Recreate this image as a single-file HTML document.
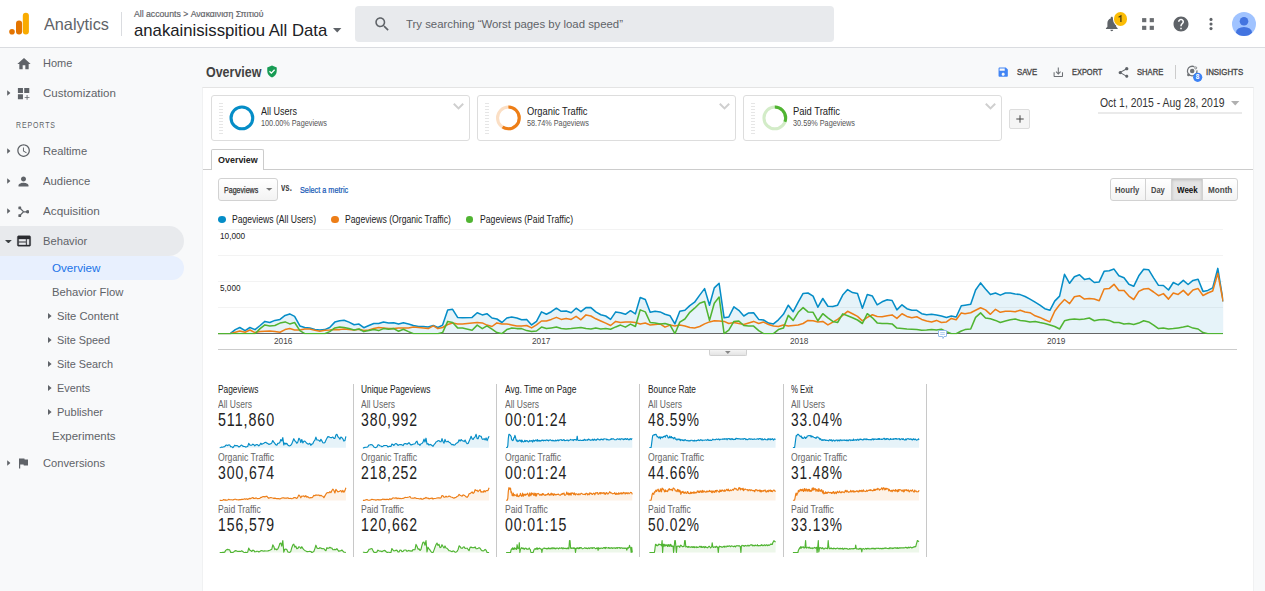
<!DOCTYPE html>
<html><head><meta charset="utf-8">
<style>
*{box-sizing:border-box;margin:0;padding:0}
html,body{width:1265px;height:591px;overflow:hidden;background:#f8f9fa;font-family:"Liberation Sans",sans-serif;color:#222}
body{position:relative}
.abs{position:absolute}
.t{position:absolute;white-space:nowrap;line-height:1;transform-origin:0 0}
#hdr{position:absolute;left:0;top:0;width:1265px;height:48px;background:#fff;border-bottom:1px solid #dadce0}
#panel{position:absolute;left:202px;top:87px;width:1052px;height:504px;background:#fff;border-top:1px solid #e4e4e4;border-left:1px solid #f0f1f2;border-right:1px solid #f0f1f2}
.tri{position:absolute;width:0;height:0;border-left:3.3px solid #5f6368;border-top:2.8px solid transparent;border-bottom:2.8px solid transparent}
.tris{position:absolute;width:0;height:0;border-left:3.5px solid #5f6368;border-top:3px solid transparent;border-bottom:3px solid transparent}
.seg{position:absolute;top:95px;width:259px;height:46px;border:1px solid #ddd;border-radius:3px;background:#fff}
.grip{position:absolute;left:7px;top:7px;width:4px;height:32px;background:repeating-linear-gradient(#e6e6e6 0 1.2px,#fff 1.2px 3px)}
.vdiv{position:absolute;top:384px;width:1px;height:173px;background:#c8c8c8}
.btn{position:absolute;top:178px;height:23px;border:1px solid #d2d2d2;background:linear-gradient(#fff,#f3f3f3)}
</style></head><body>
<div id="hdr"></div>
<!-- logo -->
<svg class="abs" style="left:0;top:0" width="130" height="48" viewBox="0 0 130 48">
<rect x="22.8" y="12.8" width="6.1" height="21.8" rx="3" fill="#f9ab00"/>
<rect x="16" y="20.6" width="6.1" height="14" rx="3" fill="#e37400"/>
<circle cx="12" cy="31.8" r="2.8" fill="#e37400"/>
<rect x="121" y="12" width="1" height="24" fill="#dadce0"/>
</svg>
<!-- account dropdown arrow -->
<svg class="abs" style="left:332.5px;top:28px" width="9" height="5" viewBox="0 0 9 5"><path d="M0,0 L8.4,0 L4.2,4.4 Z" fill="#5f6368"/></svg>
<!-- search -->
<div class="abs" style="left:355px;top:6px;width:479px;height:36px;background:#e8eaed;border-radius:4px"></div>
<svg class="abs" style="left:372.7px;top:14.6px" width="18.4" height="18.4" viewBox="0 0 24 24"><path fill="#5f6368" d="M15.5 14h-.79l-.28-.27C15.41 12.59 16 11.11 16 9.5 16 5.91 13.09 3 9.5 3S3 5.91 3 9.5 5.91 16 9.5 16c1.61 0 3.09-.59 4.23-1.57l.27.28v.79l5 4.99L20.49 19l-4.99-5zm-6 0C7.01 14 5 11.99 5 9.5S7.01 5 9.5 5 14 7.01 14 9.5 11.99 14 9.5 14z"/></svg>
<!-- right icons -->
<svg class="abs" style="left:1103.200px;top:15px" width="17.600" height="17.600" viewBox="0 0 24 24"><path fill="#5f6368" d="M12 22c1.1 0 2-.9 2-2h-4c0 1.1.89 2 2 2zm6-6v-5c0-3.07-1.64-5.64-4.5-6.32V4c0-.83-.67-1.5-1.5-1.5s-1.5.67-1.5 1.5v.68C7.63 5.36 6 7.92 6 11v5l-2 2v1h16v-1l-2-2z"/></svg>
<div class="abs" style="left:1113.7px;top:12.4px;width:13.2px;height:13.2px;border-radius:50%;background:#fbbc04;box-shadow:0 0 0 1px #fff"></div>
<svg class="abs" style="left:1142px;top:18px" width="12" height="12" viewBox="0 0 12 12"><g fill="#6a6d71"><rect x="0.100" y="0.100" width="4.200" height="4.100"/><rect x="7.700" y="0.100" width="4.200" height="4.100"/><rect x="0.100" y="7.800" width="4.200" height="4.100"/><rect x="7.700" y="7.800" width="4.200" height="4.100"/></g></svg>
<svg class="abs" style="left:1172.2px;top:15px" width="18" height="18" viewBox="0 0 24 24"><circle cx="12" cy="12" r="8" fill="#fff"/><path fill="#5f6368" d="M12 2C6.48 2 2 6.48 2 12s4.480 10 10 10 10-4.480 10-10S17.520 2 12 2zm1 17h-2v-2h2v2zm2.070-7.750l-.9.920C13.450 12.900 13 13.500 13 15h-2v-.5c0-1.100.450-2.100 1.170-2.830l1.240-1.260c.370-.360.590-.860.590-1.410 0-1.100-.9-2-2-2s-2 .9-2 2H8c0-2.210 1.790-4 4-4s4 1.790 4 4c0 .880-.360 1.680-.930 2.250z"/></svg>
<svg class="abs" style="left:1208px;top:16px" width="6" height="16" viewBox="0 0 6 16"><g fill="#5f6368"><circle cx="3" cy="3.4" r="1.55"/><circle cx="3" cy="8" r="1.55"/><circle cx="3" cy="12.6" r="1.55"/></g></svg>
<svg class="abs" style="left:1232px;top:11.7px" width="24" height="24" viewBox="0 0 24 24"><defs><clipPath id="av"><circle cx="12" cy="12" r="12"/></clipPath></defs><circle cx="12" cy="12" r="12" fill="#a0c3ff"/><g clip-path="url(#av)" fill="#4374e0"><circle cx="12" cy="9.3" r="4.3"/><ellipse cx="12" cy="20.5" rx="8" ry="5.6"/></g></svg>

<!-- sidebar -->
<div class="abs" style="left:0;top:226px;width:184px;height:30px;background:#e8eaed;border-radius:0 15px 15px 0"></div>
<div class="abs" style="left:0;top:256px;width:184px;height:24px;background:#e8f0fe;border-radius:0 12px 12px 0"></div>
<svg class="abs" style="left:15.5px;top:55.5px" width="16" height="16" viewBox="0 0 24 24"><path fill="#5f6368" d="M10 20v-6h4v6h5v-8h3L12 3 2 12h3v8z"/></svg>
<svg class="abs" style="left:16px;top:86px" width="15.2" height="15.2" viewBox="0 0 24 24"><path fill="#5f6368" d="M3 3h8v8H3zm10 0h8v8h-8zM3 13h8v8H3zm15.200 1.200h-1.400v3.100h-3.100v1.400h3.100v3.100h1.400v-3.100h3.100v-1.400h-3.100z"/></svg>
<svg class="abs" style="left:16px;top:143.4px" width="15.2" height="15.2" viewBox="0 0 24 24"><path fill="#5f6368" d="M11.990 2C6.470 2 2 6.480 2 12s4.470 10 9.990 10C17.520 22 22 17.520 22 12S17.520 2 11.990 2zM12 20c-4.420 0-8-3.580-8-8s3.580-8 8-8 8 3.580 8 8-3.580 8-8 8zm.5-13H11v6l5.250 3.150.75-1.230-4.500-2.670z"/></svg>
<svg class="abs" style="left:16px;top:174px" width="15" height="15" viewBox="0 0 24 24"><path fill="#5f6368" d="M12 12c2.210 0 4-1.790 4-4s-1.790-4-4-4-4 1.790-4 4 1.790 4 4 4zm0 2c-2.670 0-8 1.340-8 4v2h16v-2c0-2.660-5.330-4-8-4z"/></svg>
<svg class="abs" style="left:17.5px;top:205.600px" width="11.600" height="11.600" viewBox="0 0 12.5 12.5"><g fill="#5f6368"><rect x="0.4" y="0.6" width="3" height="3" rx=".6"/><rect x="0.4" y="8.9" width="3" height="3" rx=".6"/><circle cx="10.4" cy="6.25" r="1.9"/></g><path d="M1.9,2.1 L6,6.25 L1.9,10.4 M6,6.25 L10,6.25" stroke="#5f6368" stroke-width="1.300" fill="none"/></svg>
<svg class="abs" style="left:15.5px;top:233.4px" width="16" height="16" viewBox="0 0 24 24"><path fill="#2a2c30" stroke="#2a2c30" stroke-width="0.500" d="M20 4H4c-1.100 0-1.990.9-1.990 2L2 18c0 1.100.9 2 2 2h16c1.100 0 2-.9 2-2V6c0-1.100-.9-2-2-2zm-5 14H4v-4h11v4zm0-5H4V9h11v4zm5 5h-4V9h4v9z"/></svg>
<svg class="abs" style="left:16.400px;top:456px" width="14.400" height="14.400" viewBox="0 0 24 24"><path fill="#5f6368" d="M14.400 6L14 4H5v17h2v-7h5.600l.4 2h7V6z"/></svg>
<svg class="abs" style="left:7.0px;top:90.4px" width="4" height="6" viewBox="0 0 4 6"><path d="M0.2,0.2 L3.4,3 L0.2,5.8 Z" fill="#5f6368"/></svg>
<svg class="abs" style="left:7.0px;top:148.4px" width="4" height="6" viewBox="0 0 4 6"><path d="M0.2,0.2 L3.4,3 L0.2,5.8 Z" fill="#5f6368"/></svg>
<svg class="abs" style="left:7.0px;top:178.4px" width="4" height="6" viewBox="0 0 4 6"><path d="M0.2,0.2 L3.4,3 L0.2,5.8 Z" fill="#5f6368"/></svg>
<svg class="abs" style="left:7.0px;top:208.4px" width="4" height="6" viewBox="0 0 4 6"><path d="M0.2,0.2 L3.4,3 L0.2,5.8 Z" fill="#5f6368"/></svg>
<svg class="abs" style="left:7.0px;top:460.4px" width="4" height="6" viewBox="0 0 4 6"><path d="M0.2,0.2 L3.4,3 L0.2,5.8 Z" fill="#5f6368"/></svg>
<svg class="abs" style="left:5.200px;top:239.600px" width="7" height="3.600" viewBox="0 0 7 3.600"><path d="M0,0 L6.800,0 L3.400,3.500 Z" fill="#3c4043"/></svg>
<svg class="abs" style="left:47.6px;top:313.0px" width="4" height="6" viewBox="0 0 4 6"><path d="M0,0 L3.6,3 L0,6 Z" fill="#5f6368"/></svg>
<svg class="abs" style="left:47.6px;top:337.0px" width="4" height="6" viewBox="0 0 4 6"><path d="M0,0 L3.6,3 L0,6 Z" fill="#5f6368"/></svg>
<svg class="abs" style="left:47.6px;top:361.0px" width="4" height="6" viewBox="0 0 4 6"><path d="M0,0 L3.6,3 L0,6 Z" fill="#5f6368"/></svg>
<svg class="abs" style="left:47.6px;top:385.0px" width="4" height="6" viewBox="0 0 4 6"><path d="M0,0 L3.6,3 L0,6 Z" fill="#5f6368"/></svg>
<svg class="abs" style="left:47.6px;top:409.0px" width="4" height="6" viewBox="0 0 4 6"><path d="M0,0 L3.6,3 L0,6 Z" fill="#5f6368"/></svg>

<!-- title row -->
<svg class="abs" style="left:265.7px;top:65.1px" width="12" height="13" viewBox="0 0 24 26"><path fill="#189c54" d="M12 1L2.500 5v7c0 6 4 11.500 9.500 13 5.500-1.500 9.500-7 9.500-13V5L12 1z"/><path d="M7,12.500 L10.700,16.200 L17.200,9.400" stroke="#fff" stroke-width="2.600" fill="none"/></svg>
<svg class="abs" style="left:996.9px;top:65.5px" width="12.4" height="12.4" viewBox="0 0 24 24"><path fill="#4285f4" d="M17 3H5c-1.110 0-2 .9-2 2v14c0 1.100.890 2 2 2h14c1.100 0 2-.9 2-2V7l-4-4zm-5 16c-1.660 0-3-1.340-3-3s1.340-3 3-3 3 1.340 3 3-1.340 3-3 3zm3-10H5V5h10v4z"/></svg>
<svg class="abs" style="left:1051.900px;top:65.600px" width="12.600" height="12.600" viewBox="0 0 24 24"><path fill="#6d7074" d="M19 12v7H5v-7H3v7c0 1.100.9 2 2 2h14c1.100 0 2-.9 2-2v-7h-2zm-6 .670l2.590-2.580L17 11.500l-5 5-5-5 1.410-1.410L11 12.670V3h2z"/></svg>
<svg class="abs" style="left:1117px;top:65.5px" width="13" height="13" viewBox="0 0 24 24"><path fill="#5f6368" d="M18 16.080c-.760 0-1.440.3-1.960.770L8.910 12.700c.050-.230.090-.460.090-.7s-.040-.470-.090-.7l7.050-4.110c.540.5 1.250.810 2.040.810 1.660 0 3-1.340 3-3s-1.340-3-3-3-3 1.340-3 3c0 .240.040.470.090.7L8.040 9.810C7.500 9.310 6.790 9 6 9c-1.660 0-3 1.340-3 3s1.340 3 3 3c.790 0 1.500-.310 2.040-.810l7.120 4.160c-.050.210-.080.430-.080.650 0 1.610 1.310 2.920 2.920 2.920 1.610 0 2.920-1.310 2.920-2.920s-1.310-2.920-2.920-2.920z"/></svg>
<div class="abs" style="left:1175px;top:65px;width:1px;height:14px;background:#ccc"></div>
<svg class="abs" style="left:1185px;top:65px" width="20" height="18" viewBox="0 0 20 18"><path d="M9.400,1.800 A4.800,4.800 0 1 0 11.950,5.300" fill="none" stroke="#707377" stroke-width="1.250"/><circle cx="10.700" cy="2.900" r="1.050" fill="#f8f9fa" stroke="#707377" stroke-width=".8"/><circle cx="3.500" cy="9.900" r="1.400" fill="#707377"/><circle cx="7.200" cy="6.100" r="2.250" fill="#707377"/><circle cx="12.700" cy="12.300" r="4.600" fill="#3d82f5"/></svg>

<div id="panel"></div>
<!-- segments -->
<div class="seg" style="left:211px"><div class="grip"></div></div>
<div class="seg" style="left:477px"><div class="grip"></div></div>
<div class="seg" style="left:743px"><div class="grip"></div></div>
<svg class="abs" style="left:0;top:0" width="1265" height="591" viewBox="0 0 1265 591" fill="none">
<circle cx="241.900" cy="117.900" r="10.850" stroke="#058dc7" stroke-width="3.100"/>
<circle cx="508.400" cy="117.900" r="10.850" stroke="#fbdfc5" stroke-width="3.100"/>
<circle cx="508.400" cy="117.900" r="10.850" stroke="#ed7e17" stroke-width="3.100" stroke-dasharray="40.050 100" transform="rotate(-90 508.400 117.900)"/>
<circle cx="774.800" cy="117.900" r="10.850" stroke="#d3ecc8" stroke-width="3.100"/>
<circle cx="774.800" cy="117.900" r="10.850" stroke="#50b432" stroke-width="3.100" stroke-dasharray="20.850 100" transform="rotate(-90 774.800 117.900)"/>
<g stroke="#cfcfcf" stroke-width="2"><path d="M453.800,103.800 L458.500,108.400 L463.200,103.800"/><path d="M719.800,103.800 L724.500,108.400 L729.200,103.800"/><path d="M985.800,103.800 L990.500,108.400 L995.200,103.800"/></g>
</svg>
<div class="abs" style="left:1009px;top:109px;width:21px;height:20px;border:1px solid #ddd;border-radius:2px;background:#f5f5f5"></div>
<svg class="abs" style="left:1015.500px;top:115px" width="8" height="8" viewBox="0 0 8 8"><path d="M4,0.300 V7.700 M0.300,4 H7.700" stroke="#444" stroke-width="1"/></svg>
<!-- date -->
<svg class="abs" style="left:1230.800px;top:101px" width="9" height="5" viewBox="0 0 9 5"><path d="M0,0 L8.400,0 L4.200,4.500 Z" fill="#b0b0b0"/></svg>
<div class="abs" style="left:1098px;top:112px;width:144px;height:2px;background:#eaeaea"></div>
<!-- tab -->
<div class="abs" style="left:203px;top:169px;width:1050px;height:1px;background:#ccc"></div>
<div class="abs" style="left:211px;top:149px;width:53px;height:21px;border:1px solid #ccc;border-bottom:none;background:#fff;border-radius:2px 2px 0 0"></div>
<!-- controls -->
<div class="btn" style="left:218px;width:60px;border-radius:3px"></div>
<svg class="abs" style="left:265.800px;top:188.300px" width="7" height="4" viewBox="0 0 7 4"><path d="M0,0 L6.400,0 L3.200,2.800 Z" fill="#777"/></svg>
<div class="btn" style="left:1110px;width:36px;border-radius:3px 0 0 3px"></div>
<div class="btn" style="left:1145px;width:27px"></div>
<div class="btn" style="left:1171px;width:32px;background:#e4e4e4;box-shadow:inset 0 1px 3px rgba(0,0,0,.18)"></div>
<div class="btn" style="left:1202px;width:36px;border-radius:0 3px 3px 0"></div>
<!-- legend dots -->
<div class="abs" style="left:218px;top:216.400px;width:8.200px;height:7px;border-radius:50%;background:#058dc7"></div>
<div class="abs" style="left:331.200px;top:216.300px;width:7.400px;height:7.200px;border-radius:50%;background:#ed7e17"></div>
<div class="abs" style="left:465.800px;top:216.300px;width:7.600px;height:7.200px;border-radius:50%;background:#50b432"></div>
<svg class="abs" style="left:0;top:0" width="1265" height="591" viewBox="0 0 1265 591">
<g stroke="#f3f3f3" stroke-width="1" shape-rendering="crispEdges">
<line x1="218" x2="1223" y1="229.5" y2="229.5"/><line x1="218" x2="1223" y1="255.5" y2="255.5"/><line x1="218" x2="1223" y1="281.5" y2="281.5"/><line x1="218" x2="1223" y1="307.5" y2="307.5"/></g>
<defs><clipPath id="cc"><rect x="210" y="220" width="1013.400" height="114.200"/></clipPath></defs>
<path d="M218.0,333.7 L230.2,333.7 L235.3,329.6 L239.8,327.5 L245.1,330.6 L249.9,327.5 L255.0,329.6 L260.1,325.5 L264.9,321.4 L269.8,322.5 L274.9,320.4 L280.0,319.4 L285.1,315.4 L289.7,313.9 L294.6,316.4 L299.9,325.9 L304.7,327.5 L309.8,327.9 L314.9,329.6 L319.8,330.0 L324.8,329.6 L329.7,327.5 L334.8,322.1 L339.7,320.8 L344.1,320.2 L349.0,322.1 L354.1,324.7 L359.0,324.1 L363.8,327.7 L368.9,325.5 L373.8,323.5 L378.7,323.5 L383.5,322.1 L388.6,322.9 L393.7,322.7 L398.6,324.1 L403.4,322.7 L408.5,323.9 L413.4,325.5 L418.5,326.5 L423.3,326.5 L428.2,326.9 L433.3,325.5 L437.9,327.5 L442.6,325.1 L447.7,309.9 L452.6,309.3 L457.6,317.4 L462.5,317.8 L472.1,317.4 L477.2,312.7 L482.3,314.9 L486.9,313.7 L492.0,318.0 L496.9,319.0 L502.0,322.5 L506.8,318.0 L511.7,317.0 L516.8,318.0 L521.6,319.8 L526.7,319.4 L531.6,324.9 L536.5,321.4 L541.5,311.9 L546.4,314.3 L551.3,311.7 L556.4,308.2 L561.2,311.3 L566.1,310.9 L571.2,312.7 L576.1,308.2 L580.9,311.7 L586.0,307.6 L590.9,307.6 L595.8,311.9 L600.8,314.7 L605.7,316.0 L610.6,319.4 L615.7,311.9 L620.5,312.7 L625.4,314.3 L630.5,310.7 L635.4,313.9 L640.2,297.5 L645.3,299.5 L650.2,312.3 L655.1,311.3 L660.1,311.9 L665.0,314.3 L670.1,315.8 L674.9,323.9 L679.8,311.3 L684.9,310.3 L689.8,305.6 L694.6,302.2 L699.7,295.1 L704.6,288.6 L709.5,305.2 L714.3,287.9 L719.1,283.3 L724.1,317.8 L728.8,317.0 L733.9,306.8 L738.8,310.3 L743.8,316.0 L748.7,312.9 L753.6,312.7 L758.7,319.4 L763.5,320.0 L768.6,323.1 L773.5,323.9 L778.4,319.8 L783.4,314.3 L788.3,305.2 L793.2,311.7 L798.2,302.2 L803.1,293.4 L808.0,293.0 L813.1,296.1 L817.9,307.2 L822.8,298.5 L827.9,306.2 L832.8,306.6 L837.6,305.2 L842.7,295.1 L847.6,289.6 L852.5,292.6 L857.5,293.6 L862.4,308.2 L867.3,294.6 L872.4,296.1 L877.2,304.8 L882.1,301.8 L887.2,299.7 L892.1,300.5 L896.9,309.9 L902.0,304.8 L906.9,308.7 L911.8,310.3 L916.8,310.3 L921.7,313.7 L926.6,314.7 L931.6,314.3 L936.5,314.9 L941.4,316.0 L946.5,317.4 L951.3,316.0 L956.2,317.0 L961.3,305.8 L965.0,305.2 L970.7,304.2 L975.6,290.0 L980.6,282.9 L985.5,289.0 L990.4,294.6 L995.5,293.0 L1000.3,295.1 L1005.4,293.0 L1010.3,293.0 L1015.2,294.0 L1020.2,294.6 L1025.1,296.5 L1030.0,299.1 L1035.1,302.2 L1039.9,305.2 L1044.8,308.7 L1049.9,310.3 L1054.7,301.1 L1059.6,296.1 L1064.5,274.3 L1069.6,283.3 L1074.4,276.8 L1079.5,274.7 L1084.4,279.4 L1089.3,278.4 L1094.3,282.5 L1099.2,281.9 L1104.1,271.3 L1109.2,270.7 L1114.0,269.1 L1118.9,275.8 L1124.0,277.8 L1128.9,284.3 L1133.7,286.3 L1138.8,275.8 L1143.7,269.3 L1148.6,269.7 L1153.6,277.8 L1158.5,285.3 L1163.4,285.5 L1168.5,290.0 L1173.3,282.5 L1178.2,284.9 L1183.3,280.4 L1188.1,284.5 L1193.0,280.4 L1198.1,279.2 L1203.0,291.4 L1207.8,290.4 L1212.7,287.9 L1217.8,268.4 L1223.2,301.5 L1223.2,333.2 L218.0,333.2 Z" fill="#058dc7" fill-opacity="0.1"/>
<line x1="218" x2="1223" y1="333.5" y2="333.5" stroke="#666" stroke-width="1" shape-rendering="crispEdges"/>
<g clip-path="url(#cc)" fill="none" stroke-width="1.550" stroke-linejoin="round">
<path d="M218.0,333.7 L230.2,333.7 L235.3,329.6 L239.8,327.5 L245.1,330.6 L249.9,327.5 L255.0,329.6 L260.1,325.5 L264.9,321.4 L269.8,322.5 L274.9,320.4 L280.0,319.4 L285.1,315.4 L289.7,313.9 L294.6,316.4 L299.9,325.9 L304.7,327.5 L309.8,327.9 L314.9,329.6 L319.8,330.0 L324.8,329.6 L329.7,327.5 L334.8,322.1 L339.7,320.8 L344.1,320.2 L349.0,322.1 L354.1,324.7 L359.0,324.1 L363.8,327.7 L368.9,325.5 L373.8,323.5 L378.7,323.5 L383.5,322.1 L388.6,322.9 L393.7,322.7 L398.6,324.1 L403.4,322.7 L408.5,323.9 L413.4,325.5 L418.5,326.5 L423.3,326.5 L428.2,326.9 L433.3,325.5 L437.9,327.5 L442.6,325.1 L447.7,309.9 L452.6,309.3 L457.6,317.4 L462.5,317.8 L472.1,317.4 L477.2,312.7 L482.3,314.9 L486.9,313.7 L492.0,318.0 L496.9,319.0 L502.0,322.5 L506.8,318.0 L511.7,317.0 L516.8,318.0 L521.6,319.8 L526.7,319.4 L531.6,324.9 L536.5,321.4 L541.5,311.9 L546.4,314.3 L551.3,311.7 L556.4,308.2 L561.2,311.3 L566.1,310.9 L571.2,312.7 L576.1,308.2 L580.9,311.7 L586.0,307.6 L590.9,307.6 L595.8,311.9 L600.8,314.7 L605.7,316.0 L610.6,319.4 L615.7,311.9 L620.5,312.7 L625.4,314.3 L630.5,310.7 L635.4,313.9 L640.2,297.5 L645.3,299.5 L650.2,312.3 L655.1,311.3 L660.1,311.9 L665.0,314.3 L670.1,315.8 L674.9,323.9 L679.8,311.3 L684.9,310.3 L689.8,305.6 L694.6,302.2 L699.7,295.1 L704.6,288.6 L709.5,305.2 L714.3,287.9 L719.1,283.3 L724.1,317.8 L728.8,317.0 L733.9,306.8 L738.8,310.3 L743.8,316.0 L748.7,312.9 L753.6,312.7 L758.7,319.4 L763.5,320.0 L768.6,323.1 L773.5,323.9 L778.4,319.8 L783.4,314.3 L788.3,305.2 L793.2,311.7 L798.2,302.2 L803.1,293.4 L808.0,293.0 L813.1,296.1 L817.9,307.2 L822.8,298.5 L827.9,306.2 L832.8,306.6 L837.6,305.2 L842.7,295.1 L847.6,289.6 L852.5,292.6 L857.5,293.6 L862.4,308.2 L867.3,294.6 L872.4,296.1 L877.2,304.8 L882.1,301.8 L887.2,299.7 L892.1,300.5 L896.9,309.9 L902.0,304.8 L906.9,308.7 L911.8,310.3 L916.8,310.3 L921.7,313.7 L926.6,314.7 L931.6,314.3 L936.5,314.9 L941.4,316.0 L946.5,317.4 L951.3,316.0 L956.2,317.0 L961.3,305.8 L965.0,305.2 L970.7,304.2 L975.6,290.0 L980.6,282.9 L985.5,289.0 L990.4,294.6 L995.5,293.0 L1000.3,295.1 L1005.4,293.0 L1010.3,293.0 L1015.2,294.0 L1020.2,294.6 L1025.1,296.5 L1030.0,299.1 L1035.1,302.2 L1039.9,305.2 L1044.8,308.7 L1049.9,310.3 L1054.7,301.1 L1059.6,296.1 L1064.5,274.3 L1069.6,283.3 L1074.4,276.8 L1079.5,274.7 L1084.4,279.4 L1089.3,278.4 L1094.3,282.5 L1099.2,281.9 L1104.1,271.3 L1109.2,270.7 L1114.0,269.1 L1118.9,275.8 L1124.0,277.8 L1128.9,284.3 L1133.7,286.3 L1138.8,275.8 L1143.7,269.3 L1148.6,269.7 L1153.6,277.8 L1158.5,285.3 L1163.4,285.5 L1168.5,290.0 L1173.3,282.5 L1178.2,284.9 L1183.3,280.4 L1188.1,284.5 L1193.0,280.4 L1198.1,279.2 L1203.0,291.4 L1207.8,290.4 L1212.7,287.9 L1217.8,268.4 L1223.2,301.5" stroke="#058dc7"/>
<path d="M218.0,333.7 L230.2,333.7 L235.3,332.2 L239.8,331.0 L245.1,332.2 L249.9,330.0 L255.0,332.6 L260.1,331.6 L264.9,331.2 L269.8,331.0 L274.9,331.6 L280.0,332.2 L285.1,329.6 L289.7,328.6 L294.6,330.0 L299.9,330.0 L304.7,329.0 L309.8,329.0 L314.9,330.2 L319.8,331.2 L324.8,330.2 L329.7,330.0 L334.8,329.6 L339.7,329.6 L344.1,329.0 L349.0,329.6 L354.1,330.0 L359.0,329.2 L363.8,330.6 L368.9,330.0 L373.8,328.6 L378.7,327.5 L383.5,327.9 L388.6,328.6 L393.7,328.6 L398.6,328.1 L403.4,327.9 L408.5,327.9 L413.4,327.1 L418.5,327.5 L423.3,327.9 L428.2,328.6 L433.3,325.9 L437.9,328.6 L442.6,327.5 L447.7,324.5 L452.6,323.1 L457.6,324.1 L462.5,323.9 L472.1,322.9 L477.2,322.5 L482.3,322.9 L486.9,325.1 L492.0,326.5 L496.9,322.9 L502.0,323.9 L506.8,323.9 L511.7,324.9 L516.8,325.9 L521.6,326.1 L526.7,325.5 L531.6,327.9 L536.5,324.9 L541.5,321.0 L546.4,321.0 L551.3,319.4 L556.4,317.4 L561.2,319.4 L566.1,318.4 L571.2,319.4 L576.1,316.4 L580.9,319.8 L586.0,314.9 L590.9,316.0 L595.8,318.8 L600.8,321.0 L605.7,323.1 L610.6,325.5 L615.7,321.4 L620.5,322.5 L625.4,322.1 L630.5,321.9 L635.4,322.5 L640.2,324.1 L645.3,323.1 L650.2,324.9 L655.1,324.5 L660.1,323.9 L665.0,327.1 L670.1,325.1 L674.9,325.9 L679.8,325.1 L684.9,325.9 L689.8,327.5 L694.6,327.9 L699.7,326.5 L704.6,323.9 L709.5,321.9 L714.3,320.8 L719.1,321.0 L724.1,321.4 L728.8,323.5 L733.9,322.5 L738.8,323.5 L743.8,324.5 L748.7,322.9 L753.6,321.4 L758.7,323.5 L763.5,322.1 L768.6,324.5 L773.5,326.1 L778.4,326.5 L783.4,324.9 L788.3,326.1 L793.2,325.5 L798.2,325.1 L803.1,323.5 L808.0,320.4 L813.1,320.8 L817.9,321.9 L822.8,321.4 L827.9,324.9 L832.8,322.1 L837.6,319.4 L842.7,315.4 L847.6,311.3 L852.5,313.7 L857.5,316.4 L862.4,320.8 L867.3,317.4 L872.4,314.7 L877.2,316.4 L882.1,316.8 L887.2,315.8 L892.1,314.9 L896.9,318.4 L902.0,313.7 L906.9,316.4 L911.8,317.8 L916.8,316.8 L921.7,319.4 L926.6,321.0 L931.6,321.9 L936.5,320.4 L941.4,322.5 L946.5,321.9 L951.3,318.4 L956.2,319.8 L961.3,312.9 L965.0,313.7 L970.7,312.7 L975.6,310.3 L980.6,307.8 L985.5,309.9 L990.4,314.3 L995.5,309.3 L1000.3,312.3 L1005.4,311.3 L1010.3,311.3 L1015.2,311.7 L1020.2,310.3 L1025.1,311.9 L1030.0,312.7 L1035.1,315.8 L1039.9,317.4 L1044.8,319.8 L1049.9,321.9 L1054.7,311.3 L1059.6,304.8 L1064.5,299.5 L1069.6,303.6 L1074.4,296.7 L1079.5,295.7 L1084.4,299.1 L1089.3,298.5 L1094.3,299.1 L1099.2,300.7 L1104.1,289.0 L1109.2,288.6 L1114.0,284.3 L1118.9,290.6 L1124.0,290.4 L1128.9,296.1 L1133.7,299.5 L1138.8,291.4 L1143.7,289.0 L1148.6,288.6 L1153.6,292.0 L1158.5,295.7 L1163.4,293.6 L1168.5,299.1 L1173.3,293.0 L1178.2,294.4 L1183.3,290.4 L1188.1,295.1 L1193.0,290.0 L1198.1,288.6 L1203.0,295.5 L1207.8,293.0 L1212.7,291.0 L1217.8,273.4 L1223.2,301.5" stroke="#ed7e17"/>
<path d="M218.0,333.7 L255.0,333.7 L260.1,328.6 L264.9,324.9 L269.8,325.9 L274.9,325.5 L280.0,323.1 L285.1,321.9 L289.7,323.9 L294.6,322.5 L299.9,330.6 L304.7,333.7 L324.8,333.7 L329.7,331.6 L334.8,327.9 L339.7,327.1 L344.1,327.5 L349.0,328.6 L354.1,330.0 L359.0,329.0 L363.8,331.6 L368.9,330.6 L373.8,329.6 L378.7,330.6 L383.5,328.6 L388.6,329.2 L393.7,328.6 L398.6,331.2 L403.4,329.2 L408.5,331.6 L413.4,333.7 L437.9,333.7 L442.6,332.6 L447.7,321.4 L452.6,322.5 L457.6,327.9 L462.5,328.1 L472.1,330.2 L477.2,325.1 L482.3,328.6 L486.9,325.9 L492.0,329.2 L496.9,332.6 L502.0,333.7 L506.8,329.6 L511.7,328.1 L516.8,328.6 L521.6,328.6 L526.7,330.6 L531.6,331.6 L536.5,331.0 L541.5,327.1 L546.4,328.6 L551.3,327.9 L556.4,327.1 L561.2,328.6 L566.1,329.0 L571.2,328.6 L576.1,327.9 L580.9,327.5 L586.0,328.6 L590.9,329.0 L595.8,327.9 L600.8,329.0 L605.7,328.6 L610.6,329.2 L615.7,326.9 L620.5,325.1 L625.4,327.1 L630.5,324.1 L635.4,326.5 L640.2,309.9 L645.3,311.9 L650.2,322.5 L655.1,323.1 L660.1,323.9 L665.0,323.5 L670.1,325.1 L674.9,333.7 L679.8,322.1 L684.9,319.0 L689.8,312.3 L694.6,308.2 L699.7,303.2 L704.6,301.5 L709.5,320.4 L714.3,303.2 L719.1,297.1 L724.1,333.7 L728.8,330.2 L733.9,321.4 L738.8,321.0 L743.8,325.5 L748.7,325.9 L753.6,326.1 L758.7,330.6 L763.5,333.7 L773.5,333.7 L778.4,329.6 L783.4,328.1 L788.3,315.4 L793.2,320.4 L798.2,312.3 L803.1,307.6 L808.0,311.9 L813.1,312.3 L817.9,320.8 L822.8,313.7 L827.9,317.8 L832.8,321.4 L837.6,322.5 L842.7,313.9 L847.6,315.8 L852.5,317.8 L857.5,320.0 L862.4,323.5 L867.3,313.7 L872.4,317.8 L877.2,322.9 L882.1,323.5 L887.2,323.5 L892.1,323.9 L896.9,328.1 L902.0,328.6 L906.9,329.0 L911.8,329.2 L916.8,329.6 L921.7,330.2 L926.6,330.0 L931.6,329.6 L936.5,330.0 L941.4,329.2 L946.5,331.6 L951.3,333.7 L956.2,333.7 L961.3,331.0 L965.0,329.6 L970.7,329.0 L975.6,317.4 L980.6,312.9 L985.5,318.0 L990.4,318.8 L995.5,320.4 L1000.3,322.5 L1005.4,321.0 L1010.3,319.8 L1015.2,319.0 L1020.2,320.4 L1025.1,321.0 L1030.0,322.1 L1035.1,321.4 L1039.9,322.5 L1044.8,323.5 L1049.9,324.9 L1054.7,326.5 L1059.6,329.0 L1064.5,320.8 L1069.6,319.4 L1074.4,319.0 L1079.5,319.4 L1084.4,319.0 L1089.3,318.0 L1094.3,320.8 L1099.2,319.8 L1104.1,319.4 L1109.2,320.4 L1114.0,322.5 L1118.9,322.5 L1124.0,324.1 L1128.9,323.5 L1133.7,324.5 L1138.8,323.1 L1143.7,320.8 L1148.6,321.9 L1153.6,325.1 L1158.5,328.6 L1163.4,328.1 L1168.5,329.0 L1173.3,328.6 L1178.2,327.9 L1183.3,327.1 L1188.1,326.1 L1193.0,328.1 L1198.1,329.0 L1203.0,332.6 L1207.8,333.7 L1217.8,333.7 L1222.8,333.7" stroke="#50b432"/></g>
</svg>
<!-- bottom line + handle -->
<div class="abs" style="left:218px;top:349px;width:1019px;height:1px;background:#ccc"></div>
<div class="abs" style="left:709px;top:350px;width:38px;height:6px;background:linear-gradient(#f4f4f4,#e4e4e4);border:1px solid #d0d0d0;border-top:none;border-radius:0 0 2px 2px"></div>
<svg class="abs" style="left:725px;top:350.500px" width="6" height="4" viewBox="0 0 6 4"><path d="M0,0 L5.600,0 L2.800,3 Z" fill="#888"/></svg>
<!-- annotation bubble -->
<svg class="abs" style="left:938px;top:330px" width="9" height="10" viewBox="0 0 9 10"><path d="M1,0.500 H8 A.5,.5 0 0 1 8.500,1 V6 A.5,.5 0 0 1 8,6.500 H6 L5,8.500 L4.600,6.500 H1 A.5,.5 0 0 1 .5,6 V1 A.5,.5 0 0 1 1,.5 Z" fill="#fff" stroke="#8ab4e8" stroke-width=".9"/><path d="M2.200,2.600 H6.800 M2.200,4.400 H6.800" stroke="#8ab4e8" stroke-width=".7"/></svg>
<!-- metric dividers -->
<div class="vdiv" style="left:353px"></div>
<div class="vdiv" style="left:496px"></div>
<div class="vdiv" style="left:639px"></div>
<div class="vdiv" style="left:783px"></div>
<div class="vdiv" style="left:926px"></div>
<svg class="abs" style="left:0;top:0" width="1265" height="591" viewBox="0 0 1265 591"><path d="M219.7,447.8 L220.7,447.5 L221.7,447.0 L222.7,447.2 L223.7,446.7 L224.7,446.7 L225.7,445.3 L226.7,445.0 L227.7,445.6 L228.7,444.9 L229.7,445.0 L230.7,446.8 L231.7,446.7 L232.7,447.7 L233.7,446.8 L234.7,445.2 L235.7,445.8 L236.7,445.5 L237.7,445.8 L238.7,446.9 L239.7,446.6 L240.7,445.6 L241.7,445.1 L242.7,446.1 L243.7,446.4 L244.7,446.5 L245.7,447.1 L246.7,446.7 L247.7,446.5 L248.7,443.3 L249.7,444.9 L250.7,445.3 L251.8,445.2 L252.8,444.2 L253.8,444.6 L254.8,445.8 L255.8,444.8 L256.8,444.6 L257.8,444.9 L258.8,445.9 L259.8,444.9 L260.8,443.2 L261.8,444.3 L262.8,443.7 L263.8,443.2 L264.8,442.6 L265.8,442.3 L266.8,443.1 L267.8,443.5 L268.8,444.4 L269.8,444.1 L270.8,443.8 L271.8,442.8 L272.8,440.6 L273.8,442.2 L274.8,443.4 L275.8,444.8 L276.8,445.2 L277.8,443.4 L278.8,443.2 L279.8,442.5 L280.8,439.5 L281.8,441.0 L282.8,437.6 L283.8,444.9 L284.8,442.9 L285.8,444.2 L286.8,443.3 L287.8,445.0 L288.8,445.7 L289.8,445.9 L290.8,445.2 L291.8,443.9 L292.8,441.3 L293.8,438.7 L294.8,440.8 L295.8,441.6 L296.8,443.3 L297.8,442.2 L298.8,438.3 L299.8,439.2 L300.8,442.5 L301.8,439.5 L302.8,442.9 L303.8,441.4 L304.8,441.0 L305.8,442.2 L306.8,443.3 L307.8,443.9 L308.8,444.1 L309.8,443.3 L310.8,445.3 L311.8,444.1 L312.8,443.7 L313.8,441.5 L314.9,440.2 L315.9,437.1 L316.9,440.0 L317.9,440.0 L318.9,440.3 L319.9,441.4 L320.9,439.3 L321.9,440.9 L322.9,442.7 L323.9,443.0 L324.9,442.4 L325.9,440.2 L326.9,438.3 L327.9,436.6 L328.9,436.9 L329.9,437.3 L330.9,437.6 L331.9,437.6 L332.9,437.0 L333.9,438.3 L334.9,438.3 L335.9,435.0 L336.9,434.3 L337.9,436.7 L338.9,437.6 L339.9,439.2 L340.9,437.0 L341.9,437.7 L342.9,438.9 L343.9,441.1 L344.9,440.6 L345.9,436.4 L345.9,447.8 L219.7,447.8 Z" fill="#058dc7" fill-opacity="0.1"/><path d="M219.7,447.8 L220.7,447.5 L221.7,447.0 L222.7,447.2 L223.7,446.7 L224.7,446.7 L225.7,445.3 L226.7,445.0 L227.7,445.6 L228.7,444.9 L229.7,445.0 L230.7,446.8 L231.7,446.7 L232.7,447.7 L233.7,446.8 L234.7,445.2 L235.7,445.8 L236.7,445.5 L237.7,445.8 L238.7,446.9 L239.7,446.6 L240.7,445.6 L241.7,445.1 L242.7,446.1 L243.7,446.4 L244.7,446.5 L245.7,447.1 L246.7,446.7 L247.7,446.5 L248.7,443.3 L249.7,444.9 L250.7,445.3 L251.8,445.2 L252.8,444.2 L253.8,444.6 L254.8,445.8 L255.8,444.8 L256.8,444.6 L257.8,444.9 L258.8,445.9 L259.8,444.9 L260.8,443.2 L261.8,444.3 L262.8,443.7 L263.8,443.2 L264.8,442.6 L265.8,442.3 L266.8,443.1 L267.8,443.5 L268.8,444.4 L269.8,444.1 L270.8,443.8 L271.8,442.8 L272.8,440.6 L273.8,442.2 L274.8,443.4 L275.8,444.8 L276.8,445.2 L277.8,443.4 L278.8,443.2 L279.8,442.5 L280.8,439.5 L281.8,441.0 L282.8,437.6 L283.8,444.9 L284.8,442.9 L285.8,444.2 L286.8,443.3 L287.8,445.0 L288.8,445.7 L289.8,445.9 L290.8,445.2 L291.8,443.9 L292.8,441.3 L293.8,438.7 L294.8,440.8 L295.8,441.6 L296.8,443.3 L297.8,442.2 L298.8,438.3 L299.8,439.2 L300.8,442.5 L301.8,439.5 L302.8,442.9 L303.8,441.4 L304.8,441.0 L305.8,442.2 L306.8,443.3 L307.8,443.9 L308.8,444.1 L309.8,443.3 L310.8,445.3 L311.8,444.1 L312.8,443.7 L313.8,441.5 L314.9,440.2 L315.9,437.1 L316.9,440.0 L317.9,440.0 L318.9,440.3 L319.9,441.4 L320.9,439.3 L321.9,440.9 L322.9,442.7 L323.9,443.0 L324.9,442.4 L325.9,440.2 L326.9,438.3 L327.9,436.6 L328.9,436.9 L329.9,437.3 L330.9,437.6 L331.9,437.6 L332.9,437.0 L333.9,438.3 L334.9,438.3 L335.9,435.0 L336.9,434.3 L337.9,436.7 L338.9,437.6 L339.9,439.2 L340.9,437.0 L341.9,437.7 L342.9,438.9 L343.9,441.1 L344.9,440.6 L345.9,436.4" fill="none" stroke="#058dc7" stroke-width="1.15" stroke-linejoin="round"/>
<path d="M219.7,500.3 L220.7,500.3 L221.7,500.5 L222.7,500.3 L223.7,499.5 L224.7,500.1 L225.7,499.9 L226.7,500.2 L227.7,500.0 L228.7,499.3 L229.7,499.7 L230.7,499.7 L231.7,499.7 L232.7,500.0 L233.7,499.6 L234.7,499.3 L235.7,499.2 L236.7,499.7 L237.7,499.7 L238.7,499.9 L239.7,499.6 L240.7,499.6 L241.7,499.4 L242.7,499.4 L243.7,499.3 L244.7,498.8 L245.7,499.3 L246.7,498.8 L247.7,499.4 L248.7,498.8 L249.7,498.4 L250.7,498.6 L251.8,498.0 L252.8,497.5 L253.8,498.5 L254.8,498.4 L255.8,497.9 L256.8,498.3 L257.8,498.6 L258.8,498.5 L259.8,498.4 L260.8,497.3 L261.8,497.3 L262.8,496.6 L263.8,496.5 L264.8,496.9 L265.8,496.4 L266.8,496.2 L267.8,497.5 L268.8,498.3 L269.8,497.7 L270.8,497.5 L271.8,497.8 L272.8,498.0 L273.8,498.4 L274.8,498.1 L275.8,498.4 L276.8,498.6 L277.8,498.5 L278.8,498.6 L279.8,499.0 L280.8,498.5 L281.8,498.0 L282.8,497.8 L283.8,497.8 L284.8,498.3 L285.8,498.0 L286.8,498.1 L287.8,497.8 L288.8,498.4 L289.8,498.5 L290.8,498.4 L291.8,498.7 L292.8,498.5 L293.8,497.6 L294.8,497.5 L295.8,497.9 L296.8,498.5 L297.8,497.1 L298.8,495.0 L299.8,495.9 L300.8,497.8 L301.8,496.0 L302.8,496.2 L303.8,495.9 L304.8,496.8 L305.8,495.6 L306.8,497.2 L307.8,496.5 L308.8,497.7 L309.8,497.9 L310.8,497.6 L311.8,497.7 L312.8,497.0 L313.8,495.4 L314.9,495.7 L315.9,494.9 L316.9,495.2 L317.9,495.1 L318.9,495.0 L319.9,495.9 L320.9,495.3 L321.9,496.0 L322.9,496.3 L323.9,497.7 L324.9,495.9 L325.9,494.2 L326.9,492.8 L327.9,492.6 L328.9,492.8 L329.9,491.7 L330.9,492.7 L331.9,490.5 L332.9,489.1 L333.9,490.5 L334.9,493.0 L335.9,489.4 L336.9,490.6 L337.9,492.0 L338.9,491.5 L339.9,491.1 L340.9,490.5 L341.9,492.1 L342.9,490.4 L343.9,492.3 L344.9,490.6 L345.9,487.7 L345.9,500.5 L219.7,500.5 Z" fill="#ed7e17" fill-opacity="0.1"/><path d="M219.7,500.3 L220.7,500.3 L221.7,500.5 L222.7,500.3 L223.7,499.5 L224.7,500.1 L225.7,499.9 L226.7,500.2 L227.7,500.0 L228.7,499.3 L229.7,499.7 L230.7,499.7 L231.7,499.7 L232.7,500.0 L233.7,499.6 L234.7,499.3 L235.7,499.2 L236.7,499.7 L237.7,499.7 L238.7,499.9 L239.7,499.6 L240.7,499.6 L241.7,499.4 L242.7,499.4 L243.7,499.3 L244.7,498.8 L245.7,499.3 L246.7,498.8 L247.7,499.4 L248.7,498.8 L249.7,498.4 L250.7,498.6 L251.8,498.0 L252.8,497.5 L253.8,498.5 L254.8,498.4 L255.8,497.9 L256.8,498.3 L257.8,498.6 L258.8,498.5 L259.8,498.4 L260.8,497.3 L261.8,497.3 L262.8,496.6 L263.8,496.5 L264.8,496.9 L265.8,496.4 L266.8,496.2 L267.8,497.5 L268.8,498.3 L269.8,497.7 L270.8,497.5 L271.8,497.8 L272.8,498.0 L273.8,498.4 L274.8,498.1 L275.8,498.4 L276.8,498.6 L277.8,498.5 L278.8,498.6 L279.8,499.0 L280.8,498.5 L281.8,498.0 L282.8,497.8 L283.8,497.8 L284.8,498.3 L285.8,498.0 L286.8,498.1 L287.8,497.8 L288.8,498.4 L289.8,498.5 L290.8,498.4 L291.8,498.7 L292.8,498.5 L293.8,497.6 L294.8,497.5 L295.8,497.9 L296.8,498.5 L297.8,497.1 L298.8,495.0 L299.8,495.9 L300.8,497.8 L301.8,496.0 L302.8,496.2 L303.8,495.9 L304.8,496.8 L305.8,495.6 L306.8,497.2 L307.8,496.5 L308.8,497.7 L309.8,497.9 L310.8,497.6 L311.8,497.7 L312.8,497.0 L313.8,495.4 L314.9,495.7 L315.9,494.9 L316.9,495.2 L317.9,495.1 L318.9,495.0 L319.9,495.9 L320.9,495.3 L321.9,496.0 L322.9,496.3 L323.9,497.7 L324.9,495.9 L325.9,494.2 L326.9,492.8 L327.9,492.6 L328.9,492.8 L329.9,491.7 L330.9,492.7 L331.9,490.5 L332.9,489.1 L333.9,490.5 L334.9,493.0 L335.9,489.4 L336.9,490.6 L337.9,492.0 L338.9,491.5 L339.9,491.1 L340.9,490.5 L341.9,492.1 L342.9,490.4 L343.9,492.3 L344.9,490.6 L345.9,487.7" fill="none" stroke="#ed7e17" stroke-width="1.15" stroke-linejoin="round"/>
<path d="M219.7,552.5 L220.7,552.5 L221.7,552.5 L222.7,552.4 L223.7,552.4 L224.7,552.1 L225.7,550.4 L226.7,549.6 L227.7,549.4 L228.7,549.8 L229.7,549.9 L230.7,552.5 L231.7,552.3 L232.7,552.5 L233.7,551.9 L234.7,551.0 L235.7,550.6 L236.7,551.0 L237.7,551.5 L238.7,551.4 L239.7,551.4 L240.7,551.5 L241.7,550.8 L242.7,551.5 L243.7,552.2 L244.7,552.5 L245.7,552.2 L246.7,552.5 L247.7,552.2 L248.7,548.1 L249.7,550.1 L250.7,550.5 L251.8,551.5 L252.8,550.2 L253.8,550.4 L254.8,551.8 L255.8,551.7 L256.8,551.2 L257.8,551.3 L258.8,552.0 L259.8,551.4 L260.8,550.8 L261.8,550.6 L262.8,551.0 L263.8,551.1 L264.8,550.9 L265.8,551.0 L266.8,551.0 L267.8,550.9 L268.8,550.6 L269.8,550.3 L270.8,549.7 L271.8,549.2 L272.8,544.9 L273.8,546.5 L274.8,549.6 L275.8,548.9 L276.8,549.8 L277.8,548.9 L278.8,546.8 L279.8,543.6 L280.8,543.0 L281.8,546.1 L282.8,540.5 L283.8,552.1 L284.8,549.2 L285.8,549.1 L286.8,549.5 L287.8,551.9 L288.8,552.3 L289.8,552.4 L290.8,551.3 L291.8,547.7 L292.8,545.0 L293.8,544.1 L294.8,547.1 L295.8,546.2 L296.8,548.7 L297.8,548.4 L298.8,546.9 L299.8,547.0 L300.8,548.5 L301.8,546.7 L302.8,548.4 L303.8,549.6 L304.8,550.4 L305.8,550.9 L306.8,551.6 L307.8,551.6 L308.8,551.5 L309.8,551.3 L310.8,551.5 L311.8,552.5 L312.8,552.1 L313.8,551.5 L314.9,548.6 L315.9,545.2 L316.9,547.9 L317.9,548.5 L318.9,548.5 L319.9,547.7 L320.9,548.1 L321.9,548.7 L322.9,548.5 L323.9,548.7 L324.9,550.0 L325.9,550.7 L326.9,547.7 L327.9,548.3 L328.9,548.1 L329.9,547.3 L330.9,548.0 L331.9,548.1 L332.9,549.7 L333.9,549.6 L334.9,549.4 L335.9,549.7 L336.9,548.6 L337.9,550.2 L338.9,551.3 L339.9,550.9 L340.9,550.7 L341.9,550.0 L342.9,551.1 L343.9,552.2 L344.9,552.3 L345.9,552.5 L345.9,552.5 L219.7,552.5 Z" fill="#50b432" fill-opacity="0.1"/><path d="M219.7,552.5 L220.7,552.5 L221.7,552.5 L222.7,552.4 L223.7,552.4 L224.7,552.1 L225.7,550.4 L226.7,549.6 L227.7,549.4 L228.7,549.8 L229.7,549.9 L230.7,552.5 L231.7,552.3 L232.7,552.5 L233.7,551.9 L234.7,551.0 L235.7,550.6 L236.7,551.0 L237.7,551.5 L238.7,551.4 L239.7,551.4 L240.7,551.5 L241.7,550.8 L242.7,551.5 L243.7,552.2 L244.7,552.5 L245.7,552.2 L246.7,552.5 L247.7,552.2 L248.7,548.1 L249.7,550.1 L250.7,550.5 L251.8,551.5 L252.8,550.2 L253.8,550.4 L254.8,551.8 L255.8,551.7 L256.8,551.2 L257.8,551.3 L258.8,552.0 L259.8,551.4 L260.8,550.8 L261.8,550.6 L262.8,551.0 L263.8,551.1 L264.8,550.9 L265.8,551.0 L266.8,551.0 L267.8,550.9 L268.8,550.6 L269.8,550.3 L270.8,549.7 L271.8,549.2 L272.8,544.9 L273.8,546.5 L274.8,549.6 L275.8,548.9 L276.8,549.8 L277.8,548.9 L278.8,546.8 L279.8,543.6 L280.8,543.0 L281.8,546.1 L282.8,540.5 L283.8,552.1 L284.8,549.2 L285.8,549.1 L286.8,549.5 L287.8,551.9 L288.8,552.3 L289.8,552.4 L290.8,551.3 L291.8,547.7 L292.8,545.0 L293.8,544.1 L294.8,547.1 L295.8,546.2 L296.8,548.7 L297.8,548.4 L298.8,546.9 L299.8,547.0 L300.8,548.5 L301.8,546.7 L302.8,548.4 L303.8,549.6 L304.8,550.4 L305.8,550.9 L306.8,551.6 L307.8,551.6 L308.8,551.5 L309.8,551.3 L310.8,551.5 L311.8,552.5 L312.8,552.1 L313.8,551.5 L314.9,548.6 L315.9,545.2 L316.9,547.9 L317.9,548.5 L318.9,548.5 L319.9,547.7 L320.9,548.1 L321.9,548.7 L322.9,548.5 L323.9,548.7 L324.9,550.0 L325.9,550.7 L326.9,547.7 L327.9,548.3 L328.9,548.1 L329.9,547.3 L330.9,548.0 L331.9,548.1 L332.9,549.7 L333.9,549.6 L334.9,549.4 L335.9,549.7 L336.9,548.6 L337.9,550.2 L338.9,551.3 L339.9,550.9 L340.9,550.7 L341.9,550.0 L342.9,551.1 L343.9,552.2 L344.9,552.3 L345.9,552.5" fill="none" stroke="#50b432" stroke-width="1.15" stroke-linejoin="round"/>
<path d="M362.9,447.8 L363.9,447.8 L364.9,447.4 L365.9,447.3 L366.9,447.2 L367.9,446.8 L368.9,445.0 L369.9,445.0 L370.9,444.5 L371.9,444.7 L372.9,445.5 L373.9,447.0 L374.9,447.4 L375.9,447.6 L376.9,447.1 L377.9,444.9 L378.9,444.9 L379.9,445.7 L380.9,446.0 L381.9,446.7 L382.9,446.2 L383.9,445.6 L384.9,445.5 L385.9,445.5 L386.9,445.5 L387.9,447.0 L388.9,446.4 L389.9,446.2 L390.9,446.5 L391.9,444.0 L392.9,444.5 L393.9,445.5 L395.0,444.0 L396.0,443.5 L397.0,444.2 L398.0,445.4 L399.0,444.8 L400.0,444.6 L401.0,444.5 L402.0,444.9 L403.0,445.6 L404.0,444.1 L405.0,443.5 L406.0,443.6 L407.0,444.3 L408.0,443.5 L409.0,442.7 L410.0,444.0 L411.0,445.0 L412.0,444.6 L413.0,444.3 L414.0,444.0 L415.0,443.7 L416.0,442.0 L417.0,441.2 L418.0,444.2 L419.0,444.2 L420.0,445.3 L421.0,443.8 L422.0,443.5 L423.0,442.2 L424.0,439.1 L425.0,442.0 L426.0,438.2 L427.0,444.1 L428.0,443.7 L429.0,445.1 L430.0,444.4 L431.0,444.7 L432.0,445.5 L433.0,446.3 L434.0,444.7 L435.0,443.7 L436.0,442.0 L437.0,441.5 L438.0,440.7 L439.0,440.5 L440.0,441.7 L441.0,441.8 L442.0,438.6 L443.0,441.5 L444.0,443.2 L445.0,439.4 L446.0,441.7 L447.0,441.8 L448.0,441.1 L449.0,442.2 L450.0,442.7 L451.0,443.9 L452.0,444.8 L453.0,444.4 L454.0,445.2 L455.0,444.8 L456.0,443.5 L457.0,442.9 L458.1,442.3 L459.1,439.8 L460.1,441.1 L461.1,439.5 L462.1,440.6 L463.1,440.9 L464.1,441.6 L465.1,440.0 L466.1,442.3 L467.1,443.7 L468.1,443.5 L469.1,441.2 L470.1,439.1 L471.1,436.3 L472.1,438.8 L473.1,439.4 L474.1,437.7 L475.1,436.9 L476.1,434.3 L477.1,438.6 L478.1,438.7 L479.1,435.6 L480.1,436.1 L481.1,436.3 L482.1,438.9 L483.1,439.4 L484.1,438.7 L485.1,440.0 L486.1,437.9 L487.1,440.6 L488.1,438.1 L489.1,436.3 L489.1,447.8 L362.9,447.8 Z" fill="#058dc7" fill-opacity="0.1"/><path d="M362.9,447.8 L363.9,447.8 L364.9,447.4 L365.9,447.3 L366.9,447.2 L367.9,446.8 L368.9,445.0 L369.9,445.0 L370.9,444.5 L371.9,444.7 L372.9,445.5 L373.9,447.0 L374.9,447.4 L375.9,447.6 L376.9,447.1 L377.9,444.9 L378.9,444.9 L379.9,445.7 L380.9,446.0 L381.9,446.7 L382.9,446.2 L383.9,445.6 L384.9,445.5 L385.9,445.5 L386.9,445.5 L387.9,447.0 L388.9,446.4 L389.9,446.2 L390.9,446.5 L391.9,444.0 L392.9,444.5 L393.9,445.5 L395.0,444.0 L396.0,443.5 L397.0,444.2 L398.0,445.4 L399.0,444.8 L400.0,444.6 L401.0,444.5 L402.0,444.9 L403.0,445.6 L404.0,444.1 L405.0,443.5 L406.0,443.6 L407.0,444.3 L408.0,443.5 L409.0,442.7 L410.0,444.0 L411.0,445.0 L412.0,444.6 L413.0,444.3 L414.0,444.0 L415.0,443.7 L416.0,442.0 L417.0,441.2 L418.0,444.2 L419.0,444.2 L420.0,445.3 L421.0,443.8 L422.0,443.5 L423.0,442.2 L424.0,439.1 L425.0,442.0 L426.0,438.2 L427.0,444.1 L428.0,443.7 L429.0,445.1 L430.0,444.4 L431.0,444.7 L432.0,445.5 L433.0,446.3 L434.0,444.7 L435.0,443.7 L436.0,442.0 L437.0,441.5 L438.0,440.7 L439.0,440.5 L440.0,441.7 L441.0,441.8 L442.0,438.6 L443.0,441.5 L444.0,443.2 L445.0,439.4 L446.0,441.7 L447.0,441.8 L448.0,441.1 L449.0,442.2 L450.0,442.7 L451.0,443.9 L452.0,444.8 L453.0,444.4 L454.0,445.2 L455.0,444.8 L456.0,443.5 L457.0,442.9 L458.1,442.3 L459.1,439.8 L460.1,441.1 L461.1,439.5 L462.1,440.6 L463.1,440.9 L464.1,441.6 L465.1,440.0 L466.1,442.3 L467.1,443.7 L468.1,443.5 L469.1,441.2 L470.1,439.1 L471.1,436.3 L472.1,438.8 L473.1,439.4 L474.1,437.7 L475.1,436.9 L476.1,434.3 L477.1,438.6 L478.1,438.7 L479.1,435.6 L480.1,436.1 L481.1,436.3 L482.1,438.9 L483.1,439.4 L484.1,438.7 L485.1,440.0 L486.1,437.9 L487.1,440.6 L488.1,438.1 L489.1,436.3" fill="none" stroke="#058dc7" stroke-width="1.15" stroke-linejoin="round"/>
<path d="M362.9,500.4 L363.9,500.4 L364.9,500.2 L365.9,499.8 L366.9,499.6 L367.9,500.0 L368.9,500.3 L369.9,500.1 L370.9,499.8 L371.9,499.3 L372.9,499.5 L373.9,499.8 L374.9,499.7 L375.9,500.1 L376.9,499.7 L377.9,499.6 L378.9,499.9 L379.9,499.9 L380.9,499.9 L381.9,499.5 L382.9,499.1 L383.9,499.6 L384.9,499.2 L385.9,499.6 L386.9,499.2 L387.9,499.4 L388.9,499.7 L389.9,498.6 L390.9,499.5 L391.9,498.7 L392.9,497.9 L393.9,498.0 L395.0,498.3 L396.0,497.7 L397.0,498.7 L398.0,498.1 L399.0,498.6 L400.0,498.3 L401.0,498.7 L402.0,498.5 L403.0,498.4 L404.0,497.9 L405.0,497.4 L406.0,497.5 L407.0,497.5 L408.0,497.2 L409.0,497.0 L410.0,496.5 L411.0,498.0 L412.0,498.2 L413.0,498.0 L414.0,498.2 L415.0,497.6 L416.0,498.4 L417.0,498.5 L418.0,498.5 L419.0,498.7 L420.0,499.0 L421.0,498.3 L422.0,499.3 L423.0,499.1 L424.0,498.3 L425.0,498.3 L426.0,497.4 L427.0,498.2 L428.0,498.0 L429.0,498.9 L430.0,498.4 L431.0,498.5 L432.0,497.9 L433.0,499.1 L434.0,498.5 L435.0,498.5 L436.0,498.3 L437.0,498.0 L438.0,497.8 L439.0,497.8 L440.0,498.1 L441.0,497.7 L442.0,495.5 L443.0,495.8 L444.0,497.2 L445.0,497.1 L446.0,496.2 L447.0,497.0 L448.0,496.7 L449.0,496.0 L450.0,496.4 L451.0,497.0 L452.0,497.2 L453.0,497.7 L454.0,498.2 L455.0,497.6 L456.0,497.4 L457.0,496.5 L458.1,496.0 L459.1,494.4 L460.1,495.3 L461.1,495.7 L462.1,496.1 L463.1,494.9 L464.1,495.2 L465.1,495.9 L466.1,496.9 L467.1,497.3 L468.1,496.2 L469.1,493.8 L470.1,493.6 L471.1,492.8 L472.1,491.9 L473.1,493.4 L474.1,492.5 L475.1,489.6 L476.1,490.7 L477.1,490.2 L478.1,491.7 L479.1,490.5 L480.1,489.7 L481.1,492.2 L482.1,491.6 L483.1,492.3 L484.1,490.6 L485.1,492.0 L486.1,490.5 L487.1,490.8 L488.1,490.2 L489.1,487.7 L489.1,500.5 L362.9,500.5 Z" fill="#ed7e17" fill-opacity="0.1"/><path d="M362.9,500.4 L363.9,500.4 L364.9,500.2 L365.9,499.8 L366.9,499.6 L367.9,500.0 L368.9,500.3 L369.9,500.1 L370.9,499.8 L371.9,499.3 L372.9,499.5 L373.9,499.8 L374.9,499.7 L375.9,500.1 L376.9,499.7 L377.9,499.6 L378.9,499.9 L379.9,499.9 L380.9,499.9 L381.9,499.5 L382.9,499.1 L383.9,499.6 L384.9,499.2 L385.9,499.6 L386.9,499.2 L387.9,499.4 L388.9,499.7 L389.9,498.6 L390.9,499.5 L391.9,498.7 L392.9,497.9 L393.9,498.0 L395.0,498.3 L396.0,497.7 L397.0,498.7 L398.0,498.1 L399.0,498.6 L400.0,498.3 L401.0,498.7 L402.0,498.5 L403.0,498.4 L404.0,497.9 L405.0,497.4 L406.0,497.5 L407.0,497.5 L408.0,497.2 L409.0,497.0 L410.0,496.5 L411.0,498.0 L412.0,498.2 L413.0,498.0 L414.0,498.2 L415.0,497.6 L416.0,498.4 L417.0,498.5 L418.0,498.5 L419.0,498.7 L420.0,499.0 L421.0,498.3 L422.0,499.3 L423.0,499.1 L424.0,498.3 L425.0,498.3 L426.0,497.4 L427.0,498.2 L428.0,498.0 L429.0,498.9 L430.0,498.4 L431.0,498.5 L432.0,497.9 L433.0,499.1 L434.0,498.5 L435.0,498.5 L436.0,498.3 L437.0,498.0 L438.0,497.8 L439.0,497.8 L440.0,498.1 L441.0,497.7 L442.0,495.5 L443.0,495.8 L444.0,497.2 L445.0,497.1 L446.0,496.2 L447.0,497.0 L448.0,496.7 L449.0,496.0 L450.0,496.4 L451.0,497.0 L452.0,497.2 L453.0,497.7 L454.0,498.2 L455.0,497.6 L456.0,497.4 L457.0,496.5 L458.1,496.0 L459.1,494.4 L460.1,495.3 L461.1,495.7 L462.1,496.1 L463.1,494.9 L464.1,495.2 L465.1,495.9 L466.1,496.9 L467.1,497.3 L468.1,496.2 L469.1,493.8 L470.1,493.6 L471.1,492.8 L472.1,491.9 L473.1,493.4 L474.1,492.5 L475.1,489.6 L476.1,490.7 L477.1,490.2 L478.1,491.7 L479.1,490.5 L480.1,489.7 L481.1,492.2 L482.1,491.6 L483.1,492.3 L484.1,490.6 L485.1,492.0 L486.1,490.5 L487.1,490.8 L488.1,490.2 L489.1,487.7" fill="none" stroke="#ed7e17" stroke-width="1.15" stroke-linejoin="round"/>
<path d="M362.9,552.3 L363.9,552.2 L364.9,552.5 L365.9,552.5 L366.9,552.5 L367.9,551.4 L368.9,549.4 L369.9,549.2 L370.9,548.7 L371.9,548.5 L372.9,550.4 L373.9,552.3 L374.9,552.3 L375.9,552.5 L376.9,551.9 L377.9,550.1 L378.9,550.8 L379.9,551.1 L380.9,551.0 L381.9,551.7 L382.9,551.0 L383.9,550.6 L384.9,550.4 L385.9,551.5 L386.9,552.3 L387.9,552.3 L388.9,552.2 L389.9,552.5 L390.9,552.5 L391.9,548.5 L392.9,549.8 L393.9,550.9 L395.0,550.8 L396.0,550.1 L397.0,550.4 L398.0,551.9 L399.0,552.0 L400.0,550.0 L401.0,550.2 L402.0,551.6 L403.0,551.5 L404.0,550.2 L405.0,550.0 L406.0,550.0 L407.0,551.4 L408.0,550.7 L409.0,550.4 L410.0,551.1 L411.0,550.7 L412.0,551.3 L413.0,549.6 L414.0,549.8 L415.0,549.7 L416.0,544.4 L417.0,546.3 L418.0,549.1 L419.0,548.9 L420.0,550.5 L421.0,549.4 L422.0,545.2 L423.0,542.2 L424.0,542.1 L425.0,545.2 L426.0,540.5 L427.0,552.0 L428.0,547.2 L429.0,548.9 L430.0,550.0 L431.0,551.6 L432.0,552.5 L433.0,552.5 L434.0,550.1 L435.0,547.3 L436.0,544.6 L437.0,543.1 L438.0,545.4 L439.0,544.3 L440.0,547.7 L441.0,547.3 L442.0,544.7 L443.0,546.5 L444.0,548.0 L445.0,545.9 L446.0,548.0 L447.0,548.3 L448.0,549.4 L449.0,550.7 L450.0,550.7 L451.0,551.2 L452.0,551.7 L453.0,550.9 L454.0,551.2 L455.0,552.2 L456.0,552.1 L457.0,551.5 L458.1,549.5 L459.1,545.8 L460.1,546.7 L461.1,548.1 L462.1,548.3 L463.1,547.3 L464.1,546.8 L465.1,548.5 L466.1,548.3 L467.1,548.2 L468.1,549.5 L469.1,550.6 L470.1,547.4 L471.1,547.1 L472.1,547.7 L473.1,547.5 L474.1,547.7 L475.1,546.9 L476.1,548.7 L477.1,548.7 L478.1,548.3 L479.1,547.7 L480.1,548.3 L481.1,549.9 L482.1,550.8 L483.1,550.9 L484.1,550.4 L485.1,549.4 L486.1,550.2 L487.1,552.5 L488.1,552.5 L489.1,552.5 L489.1,552.5 L362.9,552.5 Z" fill="#50b432" fill-opacity="0.1"/><path d="M362.9,552.3 L363.9,552.2 L364.9,552.5 L365.9,552.5 L366.9,552.5 L367.9,551.4 L368.9,549.4 L369.9,549.2 L370.9,548.7 L371.9,548.5 L372.9,550.4 L373.9,552.3 L374.9,552.3 L375.9,552.5 L376.9,551.9 L377.9,550.1 L378.9,550.8 L379.9,551.1 L380.9,551.0 L381.9,551.7 L382.9,551.0 L383.9,550.6 L384.9,550.4 L385.9,551.5 L386.9,552.3 L387.9,552.3 L388.9,552.2 L389.9,552.5 L390.9,552.5 L391.9,548.5 L392.9,549.8 L393.9,550.9 L395.0,550.8 L396.0,550.1 L397.0,550.4 L398.0,551.9 L399.0,552.0 L400.0,550.0 L401.0,550.2 L402.0,551.6 L403.0,551.5 L404.0,550.2 L405.0,550.0 L406.0,550.0 L407.0,551.4 L408.0,550.7 L409.0,550.4 L410.0,551.1 L411.0,550.7 L412.0,551.3 L413.0,549.6 L414.0,549.8 L415.0,549.7 L416.0,544.4 L417.0,546.3 L418.0,549.1 L419.0,548.9 L420.0,550.5 L421.0,549.4 L422.0,545.2 L423.0,542.2 L424.0,542.1 L425.0,545.2 L426.0,540.5 L427.0,552.0 L428.0,547.2 L429.0,548.9 L430.0,550.0 L431.0,551.6 L432.0,552.5 L433.0,552.5 L434.0,550.1 L435.0,547.3 L436.0,544.6 L437.0,543.1 L438.0,545.4 L439.0,544.3 L440.0,547.7 L441.0,547.3 L442.0,544.7 L443.0,546.5 L444.0,548.0 L445.0,545.9 L446.0,548.0 L447.0,548.3 L448.0,549.4 L449.0,550.7 L450.0,550.7 L451.0,551.2 L452.0,551.7 L453.0,550.9 L454.0,551.2 L455.0,552.2 L456.0,552.1 L457.0,551.5 L458.1,549.5 L459.1,545.8 L460.1,546.7 L461.1,548.1 L462.1,548.3 L463.1,547.3 L464.1,546.8 L465.1,548.5 L466.1,548.3 L467.1,548.2 L468.1,549.5 L469.1,550.6 L470.1,547.4 L471.1,547.1 L472.1,547.7 L473.1,547.5 L474.1,547.7 L475.1,546.9 L476.1,548.7 L477.1,548.7 L478.1,548.3 L479.1,547.7 L480.1,548.3 L481.1,549.9 L482.1,550.8 L483.1,550.9 L484.1,550.4 L485.1,549.4 L486.1,550.2 L487.1,552.5 L488.1,552.5 L489.1,552.5" fill="none" stroke="#50b432" stroke-width="1.15" stroke-linejoin="round"/>
<path d="M506.1,447.5 L506.7,447.5 L507.2,447.5 L507.8,445.7 L508.3,438.5 L508.9,434.3 L509.4,434.4 L510.0,434.9 L510.5,435.7 L511.1,436.4 L511.6,439.4 L512.2,440.2 L512.7,440.6 L513.3,440.0 L513.8,437.8 L514.4,437.6 L514.9,435.4 L515.5,437.0 L516.0,439.6 L516.6,440.9 L517.1,440.1 L517.7,441.6 L518.2,441.5 L518.8,440.6 L519.3,440.0 L519.9,440.8 L520.4,441.2 L521.0,440.0 L521.5,442.0 L522.1,440.2 L522.6,441.5 L523.2,441.8 L523.7,441.8 L524.3,441.4 L524.8,440.3 L525.4,441.6 L525.9,440.7 L526.5,440.6 L527.0,441.2 L527.6,440.8 L528.1,441.8 L528.7,441.8 L529.2,441.5 L529.8,440.4 L530.3,440.9 L530.9,441.2 L531.5,440.6 L532.0,440.9 L532.6,442.1 L533.1,440.1 L533.7,440.3 L534.2,441.3 L534.8,440.5 L535.3,440.6 L535.9,439.9 L536.4,440.2 L537.0,441.1 L537.5,439.6 L538.1,441.2 L538.6,440.7 L539.2,440.3 L539.7,441.1 L540.3,440.6 L540.8,441.2 L541.4,440.4 L541.9,440.2 L542.5,440.5 L543.0,440.0 L543.6,440.8 L544.1,440.3 L544.7,440.4 L545.2,440.4 L545.8,440.6 L546.3,440.0 L546.9,439.9 L547.4,440.5 L548.0,440.2 L548.5,441.0 L549.1,440.2 L549.6,440.2 L550.2,439.8 L550.7,440.0 L551.3,440.7 L551.8,440.5 L552.4,440.2 L552.9,441.0 L553.5,440.4 L554.0,440.8 L554.6,440.9 L555.1,440.9 L555.7,440.0 L556.2,440.8 L556.8,440.6 L557.4,440.4 L557.9,439.8 L558.5,440.8 L559.0,440.3 L559.6,440.2 L560.1,439.7 L560.7,439.8 L561.2,439.7 L561.8,440.5 L562.3,440.3 L562.9,440.4 L563.4,439.7 L564.0,439.6 L564.5,440.6 L565.1,440.6 L565.6,440.5 L566.2,440.5 L566.7,440.1 L567.3,440.0 L567.8,440.4 L568.4,440.8 L568.9,440.2 L569.5,440.3 L570.0,440.0 L570.6,439.4 L571.1,439.8 L571.7,440.0 L572.2,439.9 L572.8,439.8 L573.3,440.6 L573.9,439.5 L574.4,439.6 L575.0,439.5 L575.5,439.6 L576.1,440.1 L576.6,440.1 L577.2,436.2 L577.7,439.8 L578.3,440.5 L578.8,440.5 L579.4,440.3 L579.9,440.3 L580.5,440.1 L581.0,440.5 L581.6,440.5 L582.2,440.3 L582.7,440.4 L583.3,440.0 L583.8,440.5 L584.4,439.3 L584.9,439.6 L585.5,440.3 L586.0,440.1 L586.6,440.0 L587.1,439.9 L587.7,440.3 L588.2,439.3 L588.8,439.1 L589.3,439.8 L589.9,439.7 L590.4,440.3 L591.0,440.2 L591.5,439.9 L592.1,440.0 L592.6,439.2 L593.2,440.1 L593.7,440.3 L594.3,439.0 L594.8,439.6 L595.4,440.1 L595.9,439.5 L596.5,440.2 L597.0,439.5 L597.6,438.9 L598.1,439.1 L598.7,439.3 L599.2,439.9 L599.8,439.7 L600.3,440.0 L600.9,439.2 L601.4,439.5 L602.0,439.1 L602.5,439.7 L603.1,439.9 L603.6,439.0 L604.2,438.8 L604.7,439.0 L605.3,439.0 L605.8,439.0 L606.4,439.1 L606.9,439.8 L607.5,439.4 L608.1,439.6 L608.6,440.0 L609.2,440.0 L609.7,439.7 L610.3,439.7 L610.8,439.1 L611.4,438.7 L611.9,439.4 L612.5,438.8 L613.0,438.7 L613.6,438.7 L614.1,439.5 L614.7,439.7 L615.2,439.7 L615.8,439.7 L616.3,439.7 L616.9,439.1 L617.4,438.8 L618.0,438.8 L618.5,439.3 L619.1,439.1 L619.6,438.9 L620.2,439.8 L620.7,439.0 L621.3,438.7 L621.8,438.9 L622.4,438.9 L622.9,439.3 L623.5,439.7 L624.0,438.8 L624.6,439.4 L625.1,438.8 L625.7,438.6 L626.2,439.3 L626.8,439.3 L627.3,438.6 L627.9,438.9 L628.4,439.6 L629.0,439.7 L629.5,439.6 L630.1,438.6 L630.6,438.7 L631.2,439.6 L631.7,438.7 L632.3,438.5 L632.3,447.8 L506.1,447.8 Z" fill="#058dc7" fill-opacity="0.1"/><path d="M506.1,447.5 L506.7,447.5 L507.2,447.5 L507.8,445.7 L508.3,438.5 L508.9,434.3 L509.4,434.4 L510.0,434.9 L510.5,435.7 L511.1,436.4 L511.6,439.4 L512.2,440.2 L512.7,440.6 L513.3,440.0 L513.8,437.8 L514.4,437.6 L514.9,435.4 L515.5,437.0 L516.0,439.6 L516.6,440.9 L517.1,440.1 L517.7,441.6 L518.2,441.5 L518.8,440.6 L519.3,440.0 L519.9,440.8 L520.4,441.2 L521.0,440.0 L521.5,442.0 L522.1,440.2 L522.6,441.5 L523.2,441.8 L523.7,441.8 L524.3,441.4 L524.8,440.3 L525.4,441.6 L525.9,440.7 L526.5,440.6 L527.0,441.2 L527.6,440.8 L528.1,441.8 L528.7,441.8 L529.2,441.5 L529.8,440.4 L530.3,440.9 L530.9,441.2 L531.5,440.6 L532.0,440.9 L532.6,442.1 L533.1,440.1 L533.7,440.3 L534.2,441.3 L534.8,440.5 L535.3,440.6 L535.9,439.9 L536.4,440.2 L537.0,441.1 L537.5,439.6 L538.1,441.2 L538.6,440.7 L539.2,440.3 L539.7,441.1 L540.3,440.6 L540.8,441.2 L541.4,440.4 L541.9,440.2 L542.5,440.5 L543.0,440.0 L543.6,440.8 L544.1,440.3 L544.7,440.4 L545.2,440.4 L545.8,440.6 L546.3,440.0 L546.9,439.9 L547.4,440.5 L548.0,440.2 L548.5,441.0 L549.1,440.2 L549.6,440.2 L550.2,439.8 L550.7,440.0 L551.3,440.7 L551.8,440.5 L552.4,440.2 L552.9,441.0 L553.5,440.4 L554.0,440.8 L554.6,440.9 L555.1,440.9 L555.7,440.0 L556.2,440.8 L556.8,440.6 L557.4,440.4 L557.9,439.8 L558.5,440.8 L559.0,440.3 L559.6,440.2 L560.1,439.7 L560.7,439.8 L561.2,439.7 L561.8,440.5 L562.3,440.3 L562.9,440.4 L563.4,439.7 L564.0,439.6 L564.5,440.6 L565.1,440.6 L565.6,440.5 L566.2,440.5 L566.7,440.1 L567.3,440.0 L567.8,440.4 L568.4,440.8 L568.9,440.2 L569.5,440.3 L570.0,440.0 L570.6,439.4 L571.1,439.8 L571.7,440.0 L572.2,439.9 L572.8,439.8 L573.3,440.6 L573.9,439.5 L574.4,439.6 L575.0,439.5 L575.5,439.6 L576.1,440.1 L576.6,440.1 L577.2,436.2 L577.7,439.8 L578.3,440.5 L578.8,440.5 L579.4,440.3 L579.9,440.3 L580.5,440.1 L581.0,440.5 L581.6,440.5 L582.2,440.3 L582.7,440.4 L583.3,440.0 L583.8,440.5 L584.4,439.3 L584.9,439.6 L585.5,440.3 L586.0,440.1 L586.6,440.0 L587.1,439.9 L587.7,440.3 L588.2,439.3 L588.8,439.1 L589.3,439.8 L589.9,439.7 L590.4,440.3 L591.0,440.2 L591.5,439.9 L592.1,440.0 L592.6,439.2 L593.2,440.1 L593.7,440.3 L594.3,439.0 L594.8,439.6 L595.4,440.1 L595.9,439.5 L596.5,440.2 L597.0,439.5 L597.6,438.9 L598.1,439.1 L598.7,439.3 L599.2,439.9 L599.8,439.7 L600.3,440.0 L600.9,439.2 L601.4,439.5 L602.0,439.1 L602.5,439.7 L603.1,439.9 L603.6,439.0 L604.2,438.8 L604.7,439.0 L605.3,439.0 L605.8,439.0 L606.4,439.1 L606.9,439.8 L607.5,439.4 L608.1,439.6 L608.6,440.0 L609.2,440.0 L609.7,439.7 L610.3,439.7 L610.8,439.1 L611.4,438.7 L611.9,439.4 L612.5,438.8 L613.0,438.7 L613.6,438.7 L614.1,439.5 L614.7,439.7 L615.2,439.7 L615.8,439.7 L616.3,439.7 L616.9,439.1 L617.4,438.8 L618.0,438.8 L618.5,439.3 L619.1,439.1 L619.6,438.9 L620.2,439.8 L620.7,439.0 L621.3,438.7 L621.8,438.9 L622.4,438.9 L622.9,439.3 L623.5,439.7 L624.0,438.8 L624.6,439.4 L625.1,438.8 L625.7,438.6 L626.2,439.3 L626.8,439.3 L627.3,438.6 L627.9,438.9 L628.4,439.6 L629.0,439.7 L629.5,439.6 L630.1,438.6 L630.6,438.7 L631.2,439.6 L631.7,438.7 L632.3,438.5" fill="none" stroke="#058dc7" stroke-width="1.15" stroke-linejoin="round"/>
<path d="M506.1,500.2 L506.7,500.2 L507.2,500.2 L507.8,498.5 L508.3,491.6 L508.9,487.7 L509.4,488.0 L510.0,489.4 L510.5,488.1 L511.1,492.6 L511.6,491.9 L512.2,495.6 L512.7,495.7 L513.3,493.0 L513.8,496.0 L514.4,494.5 L514.9,495.2 L515.5,495.2 L516.0,495.1 L516.6,496.2 L517.1,493.8 L517.7,496.5 L518.2,496.0 L518.8,496.7 L519.3,495.8 L519.9,495.3 L520.4,493.4 L521.0,495.3 L521.5,496.3 L522.1,495.7 L522.6,493.0 L523.2,496.4 L523.7,494.3 L524.3,495.2 L524.8,494.2 L525.4,495.3 L525.9,494.0 L526.5,494.7 L527.0,494.1 L527.6,493.2 L528.1,494.4 L528.7,496.0 L529.2,496.2 L529.8,492.9 L530.3,494.6 L530.9,495.7 L531.5,492.9 L532.0,494.3 L532.6,493.7 L533.1,493.1 L533.7,495.3 L534.2,495.1 L534.8,493.1 L535.3,495.9 L535.9,493.5 L536.4,496.0 L537.0,493.8 L537.5,493.7 L538.1,493.4 L538.6,493.7 L539.2,494.4 L539.7,495.1 L540.3,495.2 L540.8,494.4 L541.4,494.4 L541.9,495.4 L542.5,493.5 L543.0,494.4 L543.6,493.9 L544.1,495.0 L544.7,495.0 L545.2,495.5 L545.8,494.7 L546.3,494.9 L546.9,494.5 L547.4,494.6 L548.0,493.6 L548.5,493.4 L549.1,495.1 L549.6,494.5 L550.2,495.1 L550.7,493.9 L551.3,493.2 L551.8,495.0 L552.4,493.7 L552.9,494.7 L553.5,495.4 L554.0,493.6 L554.6,494.6 L555.1,495.0 L555.7,494.4 L556.2,494.8 L556.8,494.4 L557.4,494.3 L557.9,494.4 L558.5,494.0 L559.0,494.7 L559.6,495.1 L560.1,495.1 L560.7,495.1 L561.2,494.1 L561.8,494.5 L562.3,493.4 L562.9,494.1 L563.4,493.6 L564.0,493.0 L564.5,495.1 L565.1,495.2 L565.6,494.9 L566.2,494.3 L566.7,492.0 L567.3,493.5 L567.8,494.4 L568.4,493.0 L568.9,495.2 L569.5,493.3 L570.0,494.7 L570.6,493.1 L571.1,495.1 L571.7,492.9 L572.2,493.4 L572.8,492.9 L573.3,493.8 L573.9,494.7 L574.4,492.9 L575.0,494.1 L575.5,494.9 L576.1,493.7 L576.6,493.9 L577.2,494.0 L577.7,494.7 L578.3,494.8 L578.8,493.7 L579.4,494.0 L579.9,494.8 L580.5,494.0 L581.0,493.4 L581.6,493.4 L582.2,493.9 L582.7,494.1 L583.3,494.2 L583.8,494.5 L584.4,494.5 L584.9,494.0 L585.5,494.7 L586.0,493.3 L586.6,493.3 L587.1,493.5 L587.7,494.9 L588.2,494.1 L588.8,493.9 L589.3,494.7 L589.9,492.7 L590.4,493.2 L591.0,493.7 L591.5,493.3 L592.1,494.4 L592.6,494.4 L593.2,493.7 L593.7,493.1 L594.3,493.4 L594.8,494.8 L595.4,493.4 L595.9,492.7 L596.5,493.1 L597.0,492.7 L597.6,492.5 L598.1,494.3 L598.7,494.1 L599.2,493.5 L599.8,492.5 L600.3,493.9 L600.9,492.6 L601.4,492.8 L602.0,493.6 L602.5,493.3 L603.1,492.5 L603.6,492.9 L604.2,494.0 L604.7,492.8 L605.3,494.3 L605.8,493.8 L606.4,492.5 L606.9,492.7 L607.5,494.0 L608.1,494.0 L608.6,493.3 L609.2,492.7 L609.7,491.7 L610.3,492.5 L610.8,493.0 L611.4,492.8 L611.9,493.3 L612.5,493.8 L613.0,493.7 L613.6,493.5 L614.1,493.5 L614.7,492.7 L615.2,494.1 L615.8,494.5 L616.3,493.0 L616.9,494.1 L617.4,493.7 L618.0,494.4 L618.5,492.8 L619.1,494.0 L619.6,494.0 L620.2,492.8 L620.7,493.5 L621.3,494.0 L621.8,492.6 L622.4,493.7 L622.9,493.8 L623.5,492.4 L624.0,492.8 L624.6,492.9 L625.1,494.1 L625.7,492.8 L626.2,493.3 L626.8,492.8 L627.3,493.8 L627.9,492.9 L628.4,492.8 L629.0,493.8 L629.5,493.2 L630.1,492.9 L630.6,492.4 L631.2,492.5 L631.7,492.9 L632.3,494.4 L632.3,500.5 L506.1,500.5 Z" fill="#ed7e17" fill-opacity="0.1"/><path d="M506.1,500.2 L506.7,500.2 L507.2,500.2 L507.8,498.5 L508.3,491.6 L508.9,487.7 L509.4,488.0 L510.0,489.4 L510.5,488.1 L511.1,492.6 L511.6,491.9 L512.2,495.6 L512.7,495.7 L513.3,493.0 L513.8,496.0 L514.4,494.5 L514.9,495.2 L515.5,495.2 L516.0,495.1 L516.6,496.2 L517.1,493.8 L517.7,496.5 L518.2,496.0 L518.8,496.7 L519.3,495.8 L519.9,495.3 L520.4,493.4 L521.0,495.3 L521.5,496.3 L522.1,495.7 L522.6,493.0 L523.2,496.4 L523.7,494.3 L524.3,495.2 L524.8,494.2 L525.4,495.3 L525.9,494.0 L526.5,494.7 L527.0,494.1 L527.6,493.2 L528.1,494.4 L528.7,496.0 L529.2,496.2 L529.8,492.9 L530.3,494.6 L530.9,495.7 L531.5,492.9 L532.0,494.3 L532.6,493.7 L533.1,493.1 L533.7,495.3 L534.2,495.1 L534.8,493.1 L535.3,495.9 L535.9,493.5 L536.4,496.0 L537.0,493.8 L537.5,493.7 L538.1,493.4 L538.6,493.7 L539.2,494.4 L539.7,495.1 L540.3,495.2 L540.8,494.4 L541.4,494.4 L541.9,495.4 L542.5,493.5 L543.0,494.4 L543.6,493.9 L544.1,495.0 L544.7,495.0 L545.2,495.5 L545.8,494.7 L546.3,494.9 L546.9,494.5 L547.4,494.6 L548.0,493.6 L548.5,493.4 L549.1,495.1 L549.6,494.5 L550.2,495.1 L550.7,493.9 L551.3,493.2 L551.8,495.0 L552.4,493.7 L552.9,494.7 L553.5,495.4 L554.0,493.6 L554.6,494.6 L555.1,495.0 L555.7,494.4 L556.2,494.8 L556.8,494.4 L557.4,494.3 L557.9,494.4 L558.5,494.0 L559.0,494.7 L559.6,495.1 L560.1,495.1 L560.7,495.1 L561.2,494.1 L561.8,494.5 L562.3,493.4 L562.9,494.1 L563.4,493.6 L564.0,493.0 L564.5,495.1 L565.1,495.2 L565.6,494.9 L566.2,494.3 L566.7,492.0 L567.3,493.5 L567.8,494.4 L568.4,493.0 L568.9,495.2 L569.5,493.3 L570.0,494.7 L570.6,493.1 L571.1,495.1 L571.7,492.9 L572.2,493.4 L572.8,492.9 L573.3,493.8 L573.9,494.7 L574.4,492.9 L575.0,494.1 L575.5,494.9 L576.1,493.7 L576.6,493.9 L577.2,494.0 L577.7,494.7 L578.3,494.8 L578.8,493.7 L579.4,494.0 L579.9,494.8 L580.5,494.0 L581.0,493.4 L581.6,493.4 L582.2,493.9 L582.7,494.1 L583.3,494.2 L583.8,494.5 L584.4,494.5 L584.9,494.0 L585.5,494.7 L586.0,493.3 L586.6,493.3 L587.1,493.5 L587.7,494.9 L588.2,494.1 L588.8,493.9 L589.3,494.7 L589.9,492.7 L590.4,493.2 L591.0,493.7 L591.5,493.3 L592.1,494.4 L592.6,494.4 L593.2,493.7 L593.7,493.1 L594.3,493.4 L594.8,494.8 L595.4,493.4 L595.9,492.7 L596.5,493.1 L597.0,492.7 L597.6,492.5 L598.1,494.3 L598.7,494.1 L599.2,493.5 L599.8,492.5 L600.3,493.9 L600.9,492.6 L601.4,492.8 L602.0,493.6 L602.5,493.3 L603.1,492.5 L603.6,492.9 L604.2,494.0 L604.7,492.8 L605.3,494.3 L605.8,493.8 L606.4,492.5 L606.9,492.7 L607.5,494.0 L608.1,494.0 L608.6,493.3 L609.2,492.7 L609.7,491.7 L610.3,492.5 L610.8,493.0 L611.4,492.8 L611.9,493.3 L612.5,493.8 L613.0,493.7 L613.6,493.5 L614.1,493.5 L614.7,492.7 L615.2,494.1 L615.8,494.5 L616.3,493.0 L616.9,494.1 L617.4,493.7 L618.0,494.4 L618.5,492.8 L619.1,494.0 L619.6,494.0 L620.2,492.8 L620.7,493.5 L621.3,494.0 L621.8,492.6 L622.4,493.7 L622.9,493.8 L623.5,492.4 L624.0,492.8 L624.6,492.9 L625.1,494.1 L625.7,492.8 L626.2,493.3 L626.8,492.8 L627.3,493.8 L627.9,492.9 L628.4,492.8 L629.0,493.8 L629.5,493.2 L630.1,492.9 L630.6,492.4 L631.2,492.5 L631.7,492.9 L632.3,494.4" fill="none" stroke="#ed7e17" stroke-width="1.15" stroke-linejoin="round"/>
<path d="M506.1,552.5 L506.7,552.5 L507.2,552.5 L507.8,552.5 L508.3,552.5 L508.9,552.5 L509.4,552.5 L510.0,552.5 L510.5,552.5 L511.1,550.0 L511.6,548.8 L512.2,549.2 L512.7,547.8 L513.3,549.5 L513.8,548.5 L514.4,547.8 L514.9,549.3 L515.5,548.4 L516.0,548.3 L516.6,549.4 L517.1,544.7 L517.7,548.1 L518.2,548.6 L518.8,548.1 L519.3,542.7 L519.9,552.5 L520.4,549.3 L521.0,548.5 L521.5,547.7 L522.1,548.4 L522.6,548.0 L523.2,548.8 L523.7,548.1 L524.3,549.3 L524.8,548.9 L525.4,548.2 L525.9,548.1 L526.5,548.7 L527.0,549.3 L527.6,549.0 L528.1,549.1 L528.7,549.0 L529.2,547.9 L529.8,549.1 L530.3,549.5 L530.9,552.5 L531.5,552.5 L532.0,552.5 L532.6,552.5 L533.1,552.5 L533.7,550.7 L534.2,549.4 L534.8,548.8 L535.3,548.5 L535.9,549.4 L536.4,548.7 L537.0,547.7 L537.5,549.3 L538.1,548.4 L538.6,548.9 L539.2,548.4 L539.7,548.0 L540.3,548.8 L540.8,549.1 L541.4,549.0 L541.9,552.5 L542.5,549.0 L543.0,548.9 L543.6,548.4 L544.1,547.9 L544.7,548.5 L545.2,548.5 L545.8,548.3 L546.3,548.9 L546.9,548.3 L547.4,548.8 L548.0,548.3 L548.5,547.8 L549.1,548.9 L549.6,548.3 L550.2,548.2 L550.7,548.8 L551.3,548.6 L551.8,547.8 L552.4,547.8 L552.9,548.8 L553.5,548.1 L554.0,547.8 L554.6,548.6 L555.1,548.2 L555.7,548.9 L556.2,548.5 L556.8,548.1 L557.4,548.2 L557.9,548.0 L558.5,548.8 L559.0,548.5 L559.6,547.8 L560.1,548.2 L560.7,548.3 L561.2,548.4 L561.8,547.7 L562.3,548.2 L562.9,548.8 L563.4,547.9 L564.0,548.4 L564.5,548.3 L565.1,548.6 L565.6,548.3 L566.2,548.4 L566.7,548.7 L567.3,548.0 L567.8,548.7 L568.4,547.8 L568.9,548.8 L569.5,540.5 L570.0,540.5 L570.6,548.2 L571.1,547.9 L571.7,548.5 L572.2,547.9 L572.8,548.3 L573.3,548.5 L573.9,547.6 L574.4,548.3 L575.0,548.3 L575.5,552.5 L576.1,548.3 L576.6,548.0 L577.2,548.5 L577.7,547.7 L578.3,548.4 L578.8,548.7 L579.4,547.6 L579.9,548.5 L580.5,547.6 L581.0,547.6 L581.6,548.0 L582.2,548.7 L582.7,548.7 L583.3,548.5 L583.8,548.3 L584.4,548.0 L584.9,547.6 L585.5,548.3 L586.0,548.5 L586.6,548.0 L587.1,548.5 L587.7,548.6 L588.2,548.0 L588.8,547.9 L589.3,548.6 L589.9,548.2 L590.4,547.9 L591.0,547.8 L591.5,548.2 L592.1,547.6 L592.6,548.5 L593.2,547.8 L593.7,547.8 L594.3,547.6 L594.8,548.1 L595.4,548.6 L595.9,548.6 L596.5,548.0 L597.0,548.5 L597.6,547.9 L598.1,550.3 L598.7,547.7 L599.2,548.4 L599.8,548.6 L600.3,548.5 L600.9,548.1 L601.4,548.0 L602.0,548.2 L602.5,548.4 L603.1,548.1 L603.6,547.5 L604.2,548.0 L604.7,547.5 L605.3,548.6 L605.8,547.4 L606.4,547.6 L606.9,548.0 L607.5,548.0 L608.1,548.0 L608.6,547.5 L609.2,548.5 L609.7,547.9 L610.3,548.0 L610.8,548.3 L611.4,547.7 L611.9,547.8 L612.5,548.5 L613.0,547.8 L613.6,548.1 L614.1,548.0 L614.7,547.8 L615.2,548.5 L615.8,547.9 L616.3,548.2 L616.9,547.5 L617.4,548.3 L618.0,547.6 L618.5,547.7 L619.1,547.8 L619.6,547.5 L620.2,548.5 L620.7,547.9 L621.3,547.8 L621.8,547.8 L622.4,548.1 L622.9,548.5 L623.5,548.3 L624.0,547.8 L624.6,548.4 L625.1,548.5 L625.7,548.1 L626.2,548.0 L626.8,550.1 L627.3,548.5 L627.9,547.6 L628.4,548.2 L629.0,547.6 L629.5,545.3 L630.1,547.4 L630.6,547.8 L631.2,552.5 L631.7,547.4 L632.3,552.5 L632.3,552.5 L506.1,552.5 Z" fill="#50b432" fill-opacity="0.1"/><path d="M506.1,552.5 L506.7,552.5 L507.2,552.5 L507.8,552.5 L508.3,552.5 L508.9,552.5 L509.4,552.5 L510.0,552.5 L510.5,552.5 L511.1,550.0 L511.6,548.8 L512.2,549.2 L512.7,547.8 L513.3,549.5 L513.8,548.5 L514.4,547.8 L514.9,549.3 L515.5,548.4 L516.0,548.3 L516.6,549.4 L517.1,544.7 L517.7,548.1 L518.2,548.6 L518.8,548.1 L519.3,542.7 L519.9,552.5 L520.4,549.3 L521.0,548.5 L521.5,547.7 L522.1,548.4 L522.6,548.0 L523.2,548.8 L523.7,548.1 L524.3,549.3 L524.8,548.9 L525.4,548.2 L525.9,548.1 L526.5,548.7 L527.0,549.3 L527.6,549.0 L528.1,549.1 L528.7,549.0 L529.2,547.9 L529.8,549.1 L530.3,549.5 L530.9,552.5 L531.5,552.5 L532.0,552.5 L532.6,552.5 L533.1,552.5 L533.7,550.7 L534.2,549.4 L534.8,548.8 L535.3,548.5 L535.9,549.4 L536.4,548.7 L537.0,547.7 L537.5,549.3 L538.1,548.4 L538.6,548.9 L539.2,548.4 L539.7,548.0 L540.3,548.8 L540.8,549.1 L541.4,549.0 L541.9,552.5 L542.5,549.0 L543.0,548.9 L543.6,548.4 L544.1,547.9 L544.7,548.5 L545.2,548.5 L545.8,548.3 L546.3,548.9 L546.9,548.3 L547.4,548.8 L548.0,548.3 L548.5,547.8 L549.1,548.9 L549.6,548.3 L550.2,548.2 L550.7,548.8 L551.3,548.6 L551.8,547.8 L552.4,547.8 L552.9,548.8 L553.5,548.1 L554.0,547.8 L554.6,548.6 L555.1,548.2 L555.7,548.9 L556.2,548.5 L556.8,548.1 L557.4,548.2 L557.9,548.0 L558.5,548.8 L559.0,548.5 L559.6,547.8 L560.1,548.2 L560.7,548.3 L561.2,548.4 L561.8,547.7 L562.3,548.2 L562.9,548.8 L563.4,547.9 L564.0,548.4 L564.5,548.3 L565.1,548.6 L565.6,548.3 L566.2,548.4 L566.7,548.7 L567.3,548.0 L567.8,548.7 L568.4,547.8 L568.9,548.8 L569.5,540.5 L570.0,540.5 L570.6,548.2 L571.1,547.9 L571.7,548.5 L572.2,547.9 L572.8,548.3 L573.3,548.5 L573.9,547.6 L574.4,548.3 L575.0,548.3 L575.5,552.5 L576.1,548.3 L576.6,548.0 L577.2,548.5 L577.7,547.7 L578.3,548.4 L578.8,548.7 L579.4,547.6 L579.9,548.5 L580.5,547.6 L581.0,547.6 L581.6,548.0 L582.2,548.7 L582.7,548.7 L583.3,548.5 L583.8,548.3 L584.4,548.0 L584.9,547.6 L585.5,548.3 L586.0,548.5 L586.6,548.0 L587.1,548.5 L587.7,548.6 L588.2,548.0 L588.8,547.9 L589.3,548.6 L589.9,548.2 L590.4,547.9 L591.0,547.8 L591.5,548.2 L592.1,547.6 L592.6,548.5 L593.2,547.8 L593.7,547.8 L594.3,547.6 L594.8,548.1 L595.4,548.6 L595.9,548.6 L596.5,548.0 L597.0,548.5 L597.6,547.9 L598.1,550.3 L598.7,547.7 L599.2,548.4 L599.8,548.6 L600.3,548.5 L600.9,548.1 L601.4,548.0 L602.0,548.2 L602.5,548.4 L603.1,548.1 L603.6,547.5 L604.2,548.0 L604.7,547.5 L605.3,548.6 L605.8,547.4 L606.4,547.6 L606.9,548.0 L607.5,548.0 L608.1,548.0 L608.6,547.5 L609.2,548.5 L609.7,547.9 L610.3,548.0 L610.8,548.3 L611.4,547.7 L611.9,547.8 L612.5,548.5 L613.0,547.8 L613.6,548.1 L614.1,548.0 L614.7,547.8 L615.2,548.5 L615.8,547.9 L616.3,548.2 L616.9,547.5 L617.4,548.3 L618.0,547.6 L618.5,547.7 L619.1,547.8 L619.6,547.5 L620.2,548.5 L620.7,547.9 L621.3,547.8 L621.8,547.8 L622.4,548.1 L622.9,548.5 L623.5,548.3 L624.0,547.8 L624.6,548.4 L625.1,548.5 L625.7,548.1 L626.2,548.0 L626.8,550.1 L627.3,548.5 L627.9,547.6 L628.4,548.2 L629.0,547.6 L629.5,545.3 L630.1,547.4 L630.6,547.8 L631.2,552.5 L631.7,547.4 L632.3,552.5" fill="none" stroke="#50b432" stroke-width="1.15" stroke-linejoin="round"/>
<path d="M649.4,447.5 L650.0,447.5 L650.5,447.5 L651.1,447.5 L651.6,443.8 L652.2,439.1 L652.7,435.6 L653.3,435.1 L653.8,435.1 L654.4,434.5 L654.9,435.0 L655.5,434.3 L656.0,434.4 L656.6,435.2 L657.1,436.8 L657.7,436.5 L658.2,437.4 L658.8,438.0 L659.3,437.0 L659.9,436.9 L660.4,438.8 L661.0,436.9 L661.5,437.2 L662.1,437.6 L662.6,437.6 L663.2,436.6 L663.7,436.9 L664.3,436.2 L664.8,436.1 L665.4,437.1 L665.9,435.6 L666.5,435.3 L667.0,435.4 L667.6,436.3 L668.1,437.7 L668.7,437.9 L669.2,437.7 L669.8,436.1 L670.3,437.6 L670.9,437.6 L671.4,436.5 L672.0,437.9 L672.5,437.5 L673.1,437.9 L673.6,438.8 L674.2,437.8 L674.8,437.4 L675.3,439.1 L675.9,439.2 L676.4,439.0 L677.0,440.1 L677.5,439.3 L678.1,438.9 L678.6,439.4 L679.2,439.7 L679.7,439.0 L680.3,440.6 L680.8,439.7 L681.4,440.1 L681.9,439.8 L682.5,440.5 L683.0,439.7 L683.6,440.6 L684.1,440.6 L684.7,439.8 L685.2,439.6 L685.8,440.3 L686.3,440.4 L686.9,440.7 L687.4,440.7 L688.0,440.3 L688.5,440.9 L689.1,441.0 L689.6,440.6 L690.2,441.0 L690.7,440.4 L691.3,440.2 L691.8,440.2 L692.4,440.6 L692.9,440.8 L693.5,440.6 L694.0,441.2 L694.6,440.2 L695.1,440.7 L695.7,440.7 L696.2,441.0 L696.8,440.5 L697.3,440.3 L697.9,440.5 L698.4,439.8 L699.0,440.1 L699.5,440.6 L700.1,440.2 L700.7,439.7 L701.2,440.2 L701.8,440.0 L702.3,440.7 L702.9,440.1 L703.4,440.2 L704.0,440.2 L704.5,440.2 L705.1,439.9 L705.6,440.0 L706.2,440.0 L706.7,440.4 L707.3,440.0 L707.8,439.3 L708.4,440.0 L708.9,440.5 L709.5,440.5 L710.0,439.8 L710.6,440.4 L711.1,440.3 L711.7,440.3 L712.2,439.8 L712.8,439.0 L713.3,439.7 L713.9,439.7 L714.4,439.7 L715.0,439.6 L715.5,439.7 L716.1,439.3 L716.6,439.0 L717.2,439.3 L717.7,439.6 L718.3,439.3 L718.8,438.9 L719.4,439.9 L719.9,439.8 L720.5,439.3 L721.0,439.2 L721.6,439.2 L722.1,439.3 L722.7,438.9 L723.2,439.4 L723.8,438.9 L724.3,438.7 L724.9,439.4 L725.5,438.8 L726.0,439.0 L726.6,438.7 L727.1,439.8 L727.7,438.7 L728.2,438.8 L728.8,438.6 L729.3,438.5 L729.9,439.4 L730.4,438.9 L731.0,439.6 L731.5,439.0 L732.1,438.5 L732.6,439.5 L733.2,439.2 L733.7,439.6 L734.3,439.4 L734.8,439.4 L735.4,439.5 L735.9,438.3 L736.5,438.4 L737.0,439.0 L737.6,438.6 L738.1,438.6 L738.7,438.9 L739.2,439.0 L739.8,438.7 L740.3,438.9 L740.9,439.3 L741.4,439.1 L742.0,438.8 L742.5,438.8 L743.1,439.4 L743.6,438.8 L744.2,438.5 L744.7,438.5 L745.3,438.8 L745.8,439.6 L746.4,439.1 L746.9,439.6 L747.5,439.6 L748.0,439.4 L748.6,439.1 L749.1,438.7 L749.7,438.9 L750.2,439.4 L750.8,438.8 L751.4,439.1 L751.9,439.1 L752.5,439.4 L753.0,439.2 L753.6,439.3 L754.1,438.8 L754.7,439.2 L755.2,439.2 L755.8,439.2 L756.3,439.2 L756.9,438.9 L757.4,438.9 L758.0,438.8 L758.5,439.3 L759.1,438.8 L759.6,438.6 L760.2,438.5 L760.7,438.9 L761.3,439.8 L761.8,438.8 L762.4,438.8 L762.9,439.9 L763.5,439.5 L764.0,439.5 L764.6,438.9 L765.1,439.1 L765.7,439.6 L766.2,439.7 L766.8,439.8 L767.3,439.9 L767.9,438.9 L768.4,438.7 L769.0,439.7 L769.5,439.0 L770.1,438.7 L770.6,439.8 L771.2,439.3 L771.7,439.5 L772.3,438.7 L772.8,438.9 L773.4,440.1 L773.9,439.8 L774.5,438.9 L775.0,439.3 L775.6,439.4 L775.6,447.8 L649.4,447.8 Z" fill="#058dc7" fill-opacity="0.1"/><path d="M649.4,447.5 L650.0,447.5 L650.5,447.5 L651.1,447.5 L651.6,443.8 L652.2,439.1 L652.7,435.6 L653.3,435.1 L653.8,435.1 L654.4,434.5 L654.9,435.0 L655.5,434.3 L656.0,434.4 L656.6,435.2 L657.1,436.8 L657.7,436.5 L658.2,437.4 L658.8,438.0 L659.3,437.0 L659.9,436.9 L660.4,438.8 L661.0,436.9 L661.5,437.2 L662.1,437.6 L662.6,437.6 L663.2,436.6 L663.7,436.9 L664.3,436.2 L664.8,436.1 L665.4,437.1 L665.9,435.6 L666.5,435.3 L667.0,435.4 L667.6,436.3 L668.1,437.7 L668.7,437.9 L669.2,437.7 L669.8,436.1 L670.3,437.6 L670.9,437.6 L671.4,436.5 L672.0,437.9 L672.5,437.5 L673.1,437.9 L673.6,438.8 L674.2,437.8 L674.8,437.4 L675.3,439.1 L675.9,439.2 L676.4,439.0 L677.0,440.1 L677.5,439.3 L678.1,438.9 L678.6,439.4 L679.2,439.7 L679.7,439.0 L680.3,440.6 L680.8,439.7 L681.4,440.1 L681.9,439.8 L682.5,440.5 L683.0,439.7 L683.6,440.6 L684.1,440.6 L684.7,439.8 L685.2,439.6 L685.8,440.3 L686.3,440.4 L686.9,440.7 L687.4,440.7 L688.0,440.3 L688.5,440.9 L689.1,441.0 L689.6,440.6 L690.2,441.0 L690.7,440.4 L691.3,440.2 L691.8,440.2 L692.4,440.6 L692.9,440.8 L693.5,440.6 L694.0,441.2 L694.6,440.2 L695.1,440.7 L695.7,440.7 L696.2,441.0 L696.8,440.5 L697.3,440.3 L697.9,440.5 L698.4,439.8 L699.0,440.1 L699.5,440.6 L700.1,440.2 L700.7,439.7 L701.2,440.2 L701.8,440.0 L702.3,440.7 L702.9,440.1 L703.4,440.2 L704.0,440.2 L704.5,440.2 L705.1,439.9 L705.6,440.0 L706.2,440.0 L706.7,440.4 L707.3,440.0 L707.8,439.3 L708.4,440.0 L708.9,440.5 L709.5,440.5 L710.0,439.8 L710.6,440.4 L711.1,440.3 L711.7,440.3 L712.2,439.8 L712.8,439.0 L713.3,439.7 L713.9,439.7 L714.4,439.7 L715.0,439.6 L715.5,439.7 L716.1,439.3 L716.6,439.0 L717.2,439.3 L717.7,439.6 L718.3,439.3 L718.8,438.9 L719.4,439.9 L719.9,439.8 L720.5,439.3 L721.0,439.2 L721.6,439.2 L722.1,439.3 L722.7,438.9 L723.2,439.4 L723.8,438.9 L724.3,438.7 L724.9,439.4 L725.5,438.8 L726.0,439.0 L726.6,438.7 L727.1,439.8 L727.7,438.7 L728.2,438.8 L728.8,438.6 L729.3,438.5 L729.9,439.4 L730.4,438.9 L731.0,439.6 L731.5,439.0 L732.1,438.5 L732.6,439.5 L733.2,439.2 L733.7,439.6 L734.3,439.4 L734.8,439.4 L735.4,439.5 L735.9,438.3 L736.5,438.4 L737.0,439.0 L737.6,438.6 L738.1,438.6 L738.7,438.9 L739.2,439.0 L739.8,438.7 L740.3,438.9 L740.9,439.3 L741.4,439.1 L742.0,438.8 L742.5,438.8 L743.1,439.4 L743.6,438.8 L744.2,438.5 L744.7,438.5 L745.3,438.8 L745.8,439.6 L746.4,439.1 L746.9,439.6 L747.5,439.6 L748.0,439.4 L748.6,439.1 L749.1,438.7 L749.7,438.9 L750.2,439.4 L750.8,438.8 L751.4,439.1 L751.9,439.1 L752.5,439.4 L753.0,439.2 L753.6,439.3 L754.1,438.8 L754.7,439.2 L755.2,439.2 L755.8,439.2 L756.3,439.2 L756.9,438.9 L757.4,438.9 L758.0,438.8 L758.5,439.3 L759.1,438.8 L759.6,438.6 L760.2,438.5 L760.7,438.9 L761.3,439.8 L761.8,438.8 L762.4,438.8 L762.9,439.9 L763.5,439.5 L764.0,439.5 L764.6,438.9 L765.1,439.1 L765.7,439.6 L766.2,439.7 L766.8,439.8 L767.3,439.9 L767.9,438.9 L768.4,438.7 L769.0,439.7 L769.5,439.0 L770.1,438.7 L770.6,439.8 L771.2,439.3 L771.7,439.5 L772.3,438.7 L772.8,438.9 L773.4,440.1 L773.9,439.8 L774.5,438.9 L775.0,439.3 L775.6,439.4" fill="none" stroke="#058dc7" stroke-width="1.15" stroke-linejoin="round"/>
<path d="M649.4,500.2 L650.0,500.2 L650.5,500.2 L651.1,500.2 L651.6,497.6 L652.2,494.3 L652.7,493.1 L653.3,494.0 L653.8,494.4 L654.4,491.8 L654.9,492.3 L655.5,490.8 L656.0,490.0 L656.6,491.5 L657.1,490.2 L657.7,489.7 L658.2,489.1 L658.8,491.7 L659.3,490.9 L659.9,491.7 L660.4,488.9 L661.0,489.4 L661.5,491.8 L662.1,488.2 L662.6,488.3 L663.2,489.4 L663.7,489.5 L664.3,491.2 L664.8,491.8 L665.4,489.8 L665.9,491.5 L666.5,491.0 L667.0,490.8 L667.6,491.6 L668.1,489.9 L668.7,490.0 L669.2,488.5 L669.8,489.8 L670.3,489.3 L670.9,489.9 L671.4,489.3 L672.0,490.1 L672.5,490.7 L673.1,488.1 L673.6,488.1 L674.2,488.7 L674.8,489.2 L675.3,490.7 L675.9,491.0 L676.4,490.8 L677.0,491.7 L677.5,489.3 L678.1,491.1 L678.6,489.8 L679.2,492.0 L679.7,490.2 L680.3,491.0 L680.8,494.3 L681.4,493.1 L681.9,491.5 L682.5,492.5 L683.0,491.3 L683.6,492.7 L684.1,493.5 L684.7,492.2 L685.2,491.9 L685.8,493.1 L686.3,493.5 L686.9,493.0 L687.4,491.5 L688.0,492.0 L688.5,493.5 L689.1,493.2 L689.6,493.6 L690.2,493.7 L690.7,492.0 L691.3,493.4 L691.8,492.4 L692.4,492.6 L692.9,493.2 L693.5,491.9 L694.0,493.2 L694.6,492.0 L695.1,493.1 L695.7,492.4 L696.2,492.8 L696.8,492.6 L697.3,490.9 L697.9,491.2 L698.4,492.4 L699.0,490.9 L699.5,492.5 L700.1,492.0 L700.7,490.8 L701.2,491.3 L701.8,492.5 L702.3,490.3 L702.9,492.1 L703.4,491.9 L704.0,490.7 L704.5,491.7 L705.1,491.7 L705.6,492.2 L706.2,492.1 L706.7,491.0 L707.3,491.8 L707.8,491.1 L708.4,491.7 L708.9,491.5 L709.5,490.4 L710.0,491.6 L710.6,491.5 L711.1,490.8 L711.7,492.5 L712.2,492.7 L712.8,490.9 L713.3,491.0 L713.9,492.3 L714.4,492.4 L715.0,491.0 L715.5,490.5 L716.1,492.1 L716.6,490.3 L717.2,490.4 L717.7,491.0 L718.3,491.3 L718.8,492.0 L719.4,492.1 L719.9,489.9 L720.5,491.5 L721.0,490.3 L721.6,491.3 L722.1,489.9 L722.7,490.4 L723.2,491.0 L723.8,491.2 L724.3,489.9 L724.9,491.3 L725.5,490.9 L726.0,490.1 L726.6,489.3 L727.1,489.8 L727.7,490.6 L728.2,489.0 L728.8,490.6 L729.3,491.0 L729.9,490.4 L730.4,489.9 L731.0,490.7 L731.5,490.4 L732.1,489.9 L732.6,489.4 L733.2,490.3 L733.7,489.7 L734.3,488.4 L734.8,488.2 L735.4,488.9 L735.9,488.7 L736.5,488.9 L737.0,489.9 L737.6,490.1 L738.1,490.1 L738.7,487.9 L739.2,488.4 L739.8,487.7 L740.3,489.9 L740.9,488.6 L741.4,489.1 L742.0,488.6 L742.5,489.7 L743.1,488.2 L743.6,490.6 L744.2,489.6 L744.7,489.3 L745.3,489.0 L745.8,489.5 L746.4,489.7 L746.9,489.7 L747.5,489.5 L748.0,490.9 L748.6,490.1 L749.1,489.6 L749.7,489.7 L750.2,490.8 L750.8,489.9 L751.4,489.8 L751.9,490.5 L752.5,490.4 L753.0,490.9 L753.6,490.5 L754.1,490.4 L754.7,491.7 L755.2,490.4 L755.8,489.6 L756.3,489.8 L756.9,490.2 L757.4,491.0 L758.0,490.2 L758.5,490.6 L759.1,490.9 L759.6,490.0 L760.2,491.8 L760.7,490.2 L761.3,491.9 L761.8,490.6 L762.4,490.9 L762.9,491.5 L763.5,490.4 L764.0,490.9 L764.6,490.6 L765.1,489.9 L765.7,491.5 L766.2,492.1 L766.8,491.4 L767.3,490.5 L767.9,491.6 L768.4,491.7 L769.0,490.0 L769.5,490.6 L770.1,491.1 L770.6,490.1 L771.2,491.4 L771.7,490.6 L772.3,491.7 L772.8,491.2 L773.4,490.3 L773.9,490.1 L774.5,490.2 L775.0,491.4 L775.6,490.9 L775.6,500.5 L649.4,500.5 Z" fill="#ed7e17" fill-opacity="0.1"/><path d="M649.4,500.2 L650.0,500.2 L650.5,500.2 L651.1,500.2 L651.6,497.6 L652.2,494.3 L652.7,493.1 L653.3,494.0 L653.8,494.4 L654.4,491.8 L654.9,492.3 L655.5,490.8 L656.0,490.0 L656.6,491.5 L657.1,490.2 L657.7,489.7 L658.2,489.1 L658.8,491.7 L659.3,490.9 L659.9,491.7 L660.4,488.9 L661.0,489.4 L661.5,491.8 L662.1,488.2 L662.6,488.3 L663.2,489.4 L663.7,489.5 L664.3,491.2 L664.8,491.8 L665.4,489.8 L665.9,491.5 L666.5,491.0 L667.0,490.8 L667.6,491.6 L668.1,489.9 L668.7,490.0 L669.2,488.5 L669.8,489.8 L670.3,489.3 L670.9,489.9 L671.4,489.3 L672.0,490.1 L672.5,490.7 L673.1,488.1 L673.6,488.1 L674.2,488.7 L674.8,489.2 L675.3,490.7 L675.9,491.0 L676.4,490.8 L677.0,491.7 L677.5,489.3 L678.1,491.1 L678.6,489.8 L679.2,492.0 L679.7,490.2 L680.3,491.0 L680.8,494.3 L681.4,493.1 L681.9,491.5 L682.5,492.5 L683.0,491.3 L683.6,492.7 L684.1,493.5 L684.7,492.2 L685.2,491.9 L685.8,493.1 L686.3,493.5 L686.9,493.0 L687.4,491.5 L688.0,492.0 L688.5,493.5 L689.1,493.2 L689.6,493.6 L690.2,493.7 L690.7,492.0 L691.3,493.4 L691.8,492.4 L692.4,492.6 L692.9,493.2 L693.5,491.9 L694.0,493.2 L694.6,492.0 L695.1,493.1 L695.7,492.4 L696.2,492.8 L696.8,492.6 L697.3,490.9 L697.9,491.2 L698.4,492.4 L699.0,490.9 L699.5,492.5 L700.1,492.0 L700.7,490.8 L701.2,491.3 L701.8,492.5 L702.3,490.3 L702.9,492.1 L703.4,491.9 L704.0,490.7 L704.5,491.7 L705.1,491.7 L705.6,492.2 L706.2,492.1 L706.7,491.0 L707.3,491.8 L707.8,491.1 L708.4,491.7 L708.9,491.5 L709.5,490.4 L710.0,491.6 L710.6,491.5 L711.1,490.8 L711.7,492.5 L712.2,492.7 L712.8,490.9 L713.3,491.0 L713.9,492.3 L714.4,492.4 L715.0,491.0 L715.5,490.5 L716.1,492.1 L716.6,490.3 L717.2,490.4 L717.7,491.0 L718.3,491.3 L718.8,492.0 L719.4,492.1 L719.9,489.9 L720.5,491.5 L721.0,490.3 L721.6,491.3 L722.1,489.9 L722.7,490.4 L723.2,491.0 L723.8,491.2 L724.3,489.9 L724.9,491.3 L725.5,490.9 L726.0,490.1 L726.6,489.3 L727.1,489.8 L727.7,490.6 L728.2,489.0 L728.8,490.6 L729.3,491.0 L729.9,490.4 L730.4,489.9 L731.0,490.7 L731.5,490.4 L732.1,489.9 L732.6,489.4 L733.2,490.3 L733.7,489.7 L734.3,488.4 L734.8,488.2 L735.4,488.9 L735.9,488.7 L736.5,488.9 L737.0,489.9 L737.6,490.1 L738.1,490.1 L738.7,487.9 L739.2,488.4 L739.8,487.7 L740.3,489.9 L740.9,488.6 L741.4,489.1 L742.0,488.6 L742.5,489.7 L743.1,488.2 L743.6,490.6 L744.2,489.6 L744.7,489.3 L745.3,489.0 L745.8,489.5 L746.4,489.7 L746.9,489.7 L747.5,489.5 L748.0,490.9 L748.6,490.1 L749.1,489.6 L749.7,489.7 L750.2,490.8 L750.8,489.9 L751.4,489.8 L751.9,490.5 L752.5,490.4 L753.0,490.9 L753.6,490.5 L754.1,490.4 L754.7,491.7 L755.2,490.4 L755.8,489.6 L756.3,489.8 L756.9,490.2 L757.4,491.0 L758.0,490.2 L758.5,490.6 L759.1,490.9 L759.6,490.0 L760.2,491.8 L760.7,490.2 L761.3,491.9 L761.8,490.6 L762.4,490.9 L762.9,491.5 L763.5,490.4 L764.0,490.9 L764.6,490.6 L765.1,489.9 L765.7,491.5 L766.2,492.1 L766.8,491.4 L767.3,490.5 L767.9,491.6 L768.4,491.7 L769.0,490.0 L769.5,490.6 L770.1,491.1 L770.6,490.1 L771.2,491.4 L771.7,490.6 L772.3,491.7 L772.8,491.2 L773.4,490.3 L773.9,490.1 L774.5,490.2 L775.0,491.4 L775.6,490.9" fill="none" stroke="#ed7e17" stroke-width="1.15" stroke-linejoin="round"/>
<path d="M649.4,552.5 L650.0,552.5 L650.5,552.5 L651.1,552.5 L651.6,552.5 L652.2,552.5 L652.7,552.5 L653.3,552.5 L653.8,552.5 L654.4,552.5 L654.9,549.3 L655.5,544.2 L656.0,544.2 L656.6,545.5 L657.1,545.8 L657.7,545.0 L658.2,545.3 L658.8,544.1 L659.3,544.4 L659.9,544.6 L660.4,544.8 L661.0,544.6 L661.5,545.8 L662.1,540.5 L662.6,552.5 L663.2,544.1 L663.7,546.1 L664.3,544.4 L664.8,546.2 L665.4,544.8 L665.9,545.6 L666.5,545.5 L667.0,544.5 L667.6,546.5 L668.1,546.4 L668.7,544.5 L669.2,545.4 L669.8,546.4 L670.3,544.4 L670.9,544.5 L671.4,546.5 L672.0,545.8 L672.5,546.5 L673.1,546.1 L673.6,552.5 L674.2,546.5 L674.8,540.5 L675.3,540.5 L675.9,546.6 L676.4,552.5 L677.0,546.2 L677.5,546.2 L678.1,545.9 L678.6,546.2 L679.2,546.4 L679.7,547.3 L680.3,545.7 L680.8,545.2 L681.4,545.7 L681.9,546.2 L682.5,546.7 L683.0,546.7 L683.6,546.3 L684.1,546.3 L684.7,540.5 L685.2,540.5 L685.8,546.9 L686.3,546.8 L686.9,546.4 L687.4,546.9 L688.0,547.5 L688.5,546.4 L689.1,547.0 L689.6,546.9 L690.2,547.3 L690.7,547.0 L691.3,547.1 L691.8,546.5 L692.4,547.5 L692.9,546.8 L693.5,547.4 L694.0,546.6 L694.6,547.6 L695.1,547.3 L695.7,547.2 L696.2,546.7 L696.8,547.6 L697.3,547.0 L697.9,547.4 L698.4,547.3 L699.0,547.0 L699.5,546.3 L700.1,547.0 L700.7,546.3 L701.2,547.5 L701.8,546.4 L702.3,547.2 L702.9,547.5 L703.4,546.7 L704.0,546.4 L704.5,547.7 L705.1,547.4 L705.6,546.6 L706.2,547.3 L706.7,547.4 L707.3,547.8 L707.8,547.7 L708.4,546.9 L708.9,546.4 L709.5,546.4 L710.0,547.1 L710.6,547.8 L711.1,547.3 L711.7,546.7 L712.2,542.9 L712.8,546.9 L713.3,547.5 L713.9,547.0 L714.4,547.1 L715.0,546.8 L715.5,547.3 L716.1,546.3 L716.6,546.4 L717.2,547.4 L717.7,547.2 L718.3,552.5 L718.8,547.2 L719.4,546.2 L719.9,546.8 L720.5,546.6 L721.0,546.5 L721.6,547.2 L722.1,547.1 L722.7,547.1 L723.2,546.5 L723.8,546.4 L724.3,547.2 L724.9,546.1 L725.5,546.8 L726.0,547.0 L726.6,546.7 L727.1,545.9 L727.7,546.5 L728.2,546.4 L728.8,546.0 L729.3,545.9 L729.9,546.1 L730.4,546.6 L731.0,546.4 L731.5,545.9 L732.1,546.0 L732.6,546.3 L733.2,546.6 L733.7,546.6 L734.3,546.0 L734.8,546.3 L735.4,547.0 L735.9,546.0 L736.5,545.7 L737.0,545.9 L737.6,545.7 L738.1,545.6 L738.7,546.1 L739.2,545.7 L739.8,546.3 L740.3,546.6 L740.9,552.5 L741.4,546.2 L742.0,545.3 L742.5,545.6 L743.1,545.8 L743.6,545.6 L744.2,546.3 L744.7,545.7 L745.3,545.4 L745.8,545.8 L746.4,546.0 L746.9,545.7 L747.5,545.8 L748.0,545.2 L748.6,545.9 L749.1,546.0 L749.7,545.6 L750.2,545.0 L750.8,544.9 L751.4,545.1 L751.9,544.7 L752.5,545.5 L753.0,546.0 L753.6,545.3 L754.1,545.4 L754.7,545.8 L755.2,545.1 L755.8,545.5 L756.3,545.7 L756.9,545.5 L757.4,544.7 L758.0,546.0 L758.5,545.5 L759.1,545.6 L759.6,545.7 L760.2,545.4 L760.7,545.7 L761.3,544.7 L761.8,545.3 L762.4,545.0 L762.9,545.8 L763.5,545.4 L764.0,545.1 L764.6,544.8 L765.1,545.7 L765.7,545.4 L766.2,544.8 L766.8,544.8 L767.3,545.7 L767.9,545.2 L768.4,544.9 L769.0,545.5 L769.5,545.0 L770.1,544.8 L770.6,544.1 L771.2,544.5 L771.7,544.1 L772.3,544.4 L772.8,542.6 L773.4,541.6 L773.9,540.7 L774.5,541.2 L775.0,541.6 L775.6,542.2 L775.6,552.5 L649.4,552.5 Z" fill="#50b432" fill-opacity="0.1"/><path d="M649.4,552.5 L650.0,552.5 L650.5,552.5 L651.1,552.5 L651.6,552.5 L652.2,552.5 L652.7,552.5 L653.3,552.5 L653.8,552.5 L654.4,552.5 L654.9,549.3 L655.5,544.2 L656.0,544.2 L656.6,545.5 L657.1,545.8 L657.7,545.0 L658.2,545.3 L658.8,544.1 L659.3,544.4 L659.9,544.6 L660.4,544.8 L661.0,544.6 L661.5,545.8 L662.1,540.5 L662.6,552.5 L663.2,544.1 L663.7,546.1 L664.3,544.4 L664.8,546.2 L665.4,544.8 L665.9,545.6 L666.5,545.5 L667.0,544.5 L667.6,546.5 L668.1,546.4 L668.7,544.5 L669.2,545.4 L669.8,546.4 L670.3,544.4 L670.9,544.5 L671.4,546.5 L672.0,545.8 L672.5,546.5 L673.1,546.1 L673.6,552.5 L674.2,546.5 L674.8,540.5 L675.3,540.5 L675.9,546.6 L676.4,552.5 L677.0,546.2 L677.5,546.2 L678.1,545.9 L678.6,546.2 L679.2,546.4 L679.7,547.3 L680.3,545.7 L680.8,545.2 L681.4,545.7 L681.9,546.2 L682.5,546.7 L683.0,546.7 L683.6,546.3 L684.1,546.3 L684.7,540.5 L685.2,540.5 L685.8,546.9 L686.3,546.8 L686.9,546.4 L687.4,546.9 L688.0,547.5 L688.5,546.4 L689.1,547.0 L689.6,546.9 L690.2,547.3 L690.7,547.0 L691.3,547.1 L691.8,546.5 L692.4,547.5 L692.9,546.8 L693.5,547.4 L694.0,546.6 L694.6,547.6 L695.1,547.3 L695.7,547.2 L696.2,546.7 L696.8,547.6 L697.3,547.0 L697.9,547.4 L698.4,547.3 L699.0,547.0 L699.5,546.3 L700.1,547.0 L700.7,546.3 L701.2,547.5 L701.8,546.4 L702.3,547.2 L702.9,547.5 L703.4,546.7 L704.0,546.4 L704.5,547.7 L705.1,547.4 L705.6,546.6 L706.2,547.3 L706.7,547.4 L707.3,547.8 L707.8,547.7 L708.4,546.9 L708.9,546.4 L709.5,546.4 L710.0,547.1 L710.6,547.8 L711.1,547.3 L711.7,546.7 L712.2,542.9 L712.8,546.9 L713.3,547.5 L713.9,547.0 L714.4,547.1 L715.0,546.8 L715.5,547.3 L716.1,546.3 L716.6,546.4 L717.2,547.4 L717.7,547.2 L718.3,552.5 L718.8,547.2 L719.4,546.2 L719.9,546.8 L720.5,546.6 L721.0,546.5 L721.6,547.2 L722.1,547.1 L722.7,547.1 L723.2,546.5 L723.8,546.4 L724.3,547.2 L724.9,546.1 L725.5,546.8 L726.0,547.0 L726.6,546.7 L727.1,545.9 L727.7,546.5 L728.2,546.4 L728.8,546.0 L729.3,545.9 L729.9,546.1 L730.4,546.6 L731.0,546.4 L731.5,545.9 L732.1,546.0 L732.6,546.3 L733.2,546.6 L733.7,546.6 L734.3,546.0 L734.8,546.3 L735.4,547.0 L735.9,546.0 L736.5,545.7 L737.0,545.9 L737.6,545.7 L738.1,545.6 L738.7,546.1 L739.2,545.7 L739.8,546.3 L740.3,546.6 L740.9,552.5 L741.4,546.2 L742.0,545.3 L742.5,545.6 L743.1,545.8 L743.6,545.6 L744.2,546.3 L744.7,545.7 L745.3,545.4 L745.8,545.8 L746.4,546.0 L746.9,545.7 L747.5,545.8 L748.0,545.2 L748.6,545.9 L749.1,546.0 L749.7,545.6 L750.2,545.0 L750.8,544.9 L751.4,545.1 L751.9,544.7 L752.5,545.5 L753.0,546.0 L753.6,545.3 L754.1,545.4 L754.7,545.8 L755.2,545.1 L755.8,545.5 L756.3,545.7 L756.9,545.5 L757.4,544.7 L758.0,546.0 L758.5,545.5 L759.1,545.6 L759.6,545.7 L760.2,545.4 L760.7,545.7 L761.3,544.7 L761.8,545.3 L762.4,545.0 L762.9,545.8 L763.5,545.4 L764.0,545.1 L764.6,544.8 L765.1,545.7 L765.7,545.4 L766.2,544.8 L766.8,544.8 L767.3,545.7 L767.9,545.2 L768.4,544.9 L769.0,545.5 L769.5,545.0 L770.1,544.8 L770.6,544.1 L771.2,544.5 L771.7,544.1 L772.3,544.4 L772.8,542.6 L773.4,541.6 L773.9,540.7 L774.5,541.2 L775.0,541.6 L775.6,542.2" fill="none" stroke="#50b432" stroke-width="1.15" stroke-linejoin="round"/>
<path d="M792.9,447.5 L793.5,447.5 L794.0,447.5 L794.6,447.5 L795.1,443.8 L795.7,439.1 L796.2,435.6 L796.8,435.8 L797.3,434.6 L797.9,434.3 L798.4,434.3 L799.0,435.3 L799.5,435.7 L800.1,436.3 L800.6,436.6 L801.2,436.0 L801.7,437.8 L802.3,437.4 L802.8,438.5 L803.4,438.4 L803.9,438.0 L804.5,436.9 L805.0,437.2 L805.6,438.4 L806.1,437.6 L806.7,437.7 L807.2,436.0 L807.8,436.0 L808.3,435.8 L808.9,435.6 L809.4,435.7 L810.0,435.4 L810.5,435.8 L811.1,437.1 L811.6,435.9 L812.2,436.8 L812.7,436.4 L813.3,436.9 L813.8,437.3 L814.4,437.6 L814.9,437.5 L815.5,437.9 L816.0,438.5 L816.6,437.1 L817.1,437.2 L817.7,436.9 L818.3,437.7 L818.8,438.2 L819.4,438.1 L819.9,439.6 L820.5,438.7 L821.0,439.4 L821.6,440.2 L822.1,440.4 L822.7,439.7 L823.2,440.3 L823.8,439.9 L824.3,439.7 L824.9,440.1 L825.4,440.5 L826.0,440.0 L826.5,440.4 L827.1,440.4 L827.6,440.5 L828.2,440.3 L828.7,440.8 L829.3,440.0 L829.8,439.7 L830.4,440.5 L830.9,440.1 L831.5,439.8 L832.0,441.1 L832.6,441.0 L833.1,440.1 L833.7,440.1 L834.2,440.4 L834.8,441.1 L835.3,440.7 L835.9,440.1 L836.4,440.0 L837.0,440.1 L837.5,440.9 L838.1,440.0 L838.6,440.6 L839.2,440.1 L839.7,440.9 L840.3,439.8 L840.8,440.2 L841.4,440.0 L841.9,440.7 L842.5,440.1 L843.0,440.2 L843.6,440.1 L844.2,440.4 L844.7,439.9 L845.3,440.4 L845.8,440.4 L846.4,440.6 L846.9,439.9 L847.5,440.6 L848.0,440.4 L848.6,440.6 L849.1,439.8 L849.7,439.9 L850.2,439.9 L850.8,440.6 L851.3,440.0 L851.9,440.1 L852.4,440.4 L853.0,440.5 L853.5,439.1 L854.1,440.3 L854.6,440.0 L855.2,440.0 L855.7,439.6 L856.3,440.3 L856.8,439.7 L857.4,439.8 L857.9,439.2 L858.5,440.3 L859.0,439.8 L859.6,439.6 L860.1,438.9 L860.7,439.5 L861.2,439.6 L861.8,439.3 L862.3,439.8 L862.9,440.1 L863.4,439.5 L864.0,438.9 L864.5,439.1 L865.1,439.7 L865.6,439.1 L866.2,438.9 L866.7,439.7 L867.3,439.2 L867.8,439.5 L868.4,439.6 L869.0,439.6 L869.5,439.7 L870.1,439.5 L870.6,439.9 L871.2,439.4 L871.7,439.8 L872.3,438.8 L872.8,439.0 L873.4,439.8 L873.9,438.8 L874.5,439.5 L875.0,439.1 L875.6,439.0 L876.1,439.3 L876.7,439.3 L877.2,439.1 L877.8,439.5 L878.3,438.5 L878.9,439.5 L879.4,438.5 L880.0,439.3 L880.5,439.2 L881.1,439.0 L881.6,439.5 L882.2,439.4 L882.7,439.1 L883.3,439.0 L883.8,438.4 L884.4,438.3 L884.9,439.6 L885.5,438.9 L886.0,439.5 L886.6,438.6 L887.1,439.2 L887.7,438.5 L888.2,438.9 L888.8,439.5 L889.3,439.7 L889.9,439.4 L890.4,438.5 L891.0,439.5 L891.5,439.1 L892.1,439.2 L892.6,439.3 L893.2,438.7 L893.7,439.5 L894.3,438.8 L894.9,438.9 L895.4,438.5 L896.0,439.1 L896.5,438.5 L897.1,439.2 L897.6,439.0 L898.2,439.0 L898.7,438.7 L899.3,438.6 L899.8,439.7 L900.4,439.7 L900.9,439.1 L901.5,438.8 L902.0,439.1 L902.6,439.5 L903.1,438.6 L903.7,439.5 L904.2,439.8 L904.8,439.8 L905.3,439.9 L905.9,438.9 L906.4,439.8 L907.0,439.0 L907.5,438.8 L908.1,438.6 L908.6,438.9 L909.2,439.4 L909.7,439.1 L910.3,438.9 L910.8,439.0 L911.4,439.6 L911.9,439.0 L912.5,439.9 L913.0,439.6 L913.6,438.7 L914.1,439.4 L914.7,439.7 L915.2,439.0 L915.8,439.5 L916.3,440.1 L916.9,440.0 L917.4,439.7 L918.0,439.6 L918.5,438.8 L919.1,439.8 L919.1,447.8 L792.9,447.8 Z" fill="#058dc7" fill-opacity="0.1"/><path d="M792.9,447.5 L793.5,447.5 L794.0,447.5 L794.6,447.5 L795.1,443.8 L795.7,439.1 L796.2,435.6 L796.8,435.8 L797.3,434.6 L797.9,434.3 L798.4,434.3 L799.0,435.3 L799.5,435.7 L800.1,436.3 L800.6,436.6 L801.2,436.0 L801.7,437.8 L802.3,437.4 L802.8,438.5 L803.4,438.4 L803.9,438.0 L804.5,436.9 L805.0,437.2 L805.6,438.4 L806.1,437.6 L806.7,437.7 L807.2,436.0 L807.8,436.0 L808.3,435.8 L808.9,435.6 L809.4,435.7 L810.0,435.4 L810.5,435.8 L811.1,437.1 L811.6,435.9 L812.2,436.8 L812.7,436.4 L813.3,436.9 L813.8,437.3 L814.4,437.6 L814.9,437.5 L815.5,437.9 L816.0,438.5 L816.6,437.1 L817.1,437.2 L817.7,436.9 L818.3,437.7 L818.8,438.2 L819.4,438.1 L819.9,439.6 L820.5,438.7 L821.0,439.4 L821.6,440.2 L822.1,440.4 L822.7,439.7 L823.2,440.3 L823.8,439.9 L824.3,439.7 L824.9,440.1 L825.4,440.5 L826.0,440.0 L826.5,440.4 L827.1,440.4 L827.6,440.5 L828.2,440.3 L828.7,440.8 L829.3,440.0 L829.8,439.7 L830.4,440.5 L830.9,440.1 L831.5,439.8 L832.0,441.1 L832.6,441.0 L833.1,440.1 L833.7,440.1 L834.2,440.4 L834.8,441.1 L835.3,440.7 L835.9,440.1 L836.4,440.0 L837.0,440.1 L837.5,440.9 L838.1,440.0 L838.6,440.6 L839.2,440.1 L839.7,440.9 L840.3,439.8 L840.8,440.2 L841.4,440.0 L841.9,440.7 L842.5,440.1 L843.0,440.2 L843.6,440.1 L844.2,440.4 L844.7,439.9 L845.3,440.4 L845.8,440.4 L846.4,440.6 L846.9,439.9 L847.5,440.6 L848.0,440.4 L848.6,440.6 L849.1,439.8 L849.7,439.9 L850.2,439.9 L850.8,440.6 L851.3,440.0 L851.9,440.1 L852.4,440.4 L853.0,440.5 L853.5,439.1 L854.1,440.3 L854.6,440.0 L855.2,440.0 L855.7,439.6 L856.3,440.3 L856.8,439.7 L857.4,439.8 L857.9,439.2 L858.5,440.3 L859.0,439.8 L859.6,439.6 L860.1,438.9 L860.7,439.5 L861.2,439.6 L861.8,439.3 L862.3,439.8 L862.9,440.1 L863.4,439.5 L864.0,438.9 L864.5,439.1 L865.1,439.7 L865.6,439.1 L866.2,438.9 L866.7,439.7 L867.3,439.2 L867.8,439.5 L868.4,439.6 L869.0,439.6 L869.5,439.7 L870.1,439.5 L870.6,439.9 L871.2,439.4 L871.7,439.8 L872.3,438.8 L872.8,439.0 L873.4,439.8 L873.9,438.8 L874.5,439.5 L875.0,439.1 L875.6,439.0 L876.1,439.3 L876.7,439.3 L877.2,439.1 L877.8,439.5 L878.3,438.5 L878.9,439.5 L879.4,438.5 L880.0,439.3 L880.5,439.2 L881.1,439.0 L881.6,439.5 L882.2,439.4 L882.7,439.1 L883.3,439.0 L883.8,438.4 L884.4,438.3 L884.9,439.6 L885.5,438.9 L886.0,439.5 L886.6,438.6 L887.1,439.2 L887.7,438.5 L888.2,438.9 L888.8,439.5 L889.3,439.7 L889.9,439.4 L890.4,438.5 L891.0,439.5 L891.5,439.1 L892.1,439.2 L892.6,439.3 L893.2,438.7 L893.7,439.5 L894.3,438.8 L894.9,438.9 L895.4,438.5 L896.0,439.1 L896.5,438.5 L897.1,439.2 L897.6,439.0 L898.2,439.0 L898.7,438.7 L899.3,438.6 L899.8,439.7 L900.4,439.7 L900.9,439.1 L901.5,438.8 L902.0,439.1 L902.6,439.5 L903.1,438.6 L903.7,439.5 L904.2,439.8 L904.8,439.8 L905.3,439.9 L905.9,438.9 L906.4,439.8 L907.0,439.0 L907.5,438.8 L908.1,438.6 L908.6,438.9 L909.2,439.4 L909.7,439.1 L910.3,438.9 L910.8,439.0 L911.4,439.6 L911.9,439.0 L912.5,439.9 L913.0,439.6 L913.6,438.7 L914.1,439.4 L914.7,439.7 L915.2,439.0 L915.8,439.5 L916.3,440.1 L916.9,440.0 L917.4,439.7 L918.0,439.6 L918.5,438.8 L919.1,439.8" fill="none" stroke="#058dc7" stroke-width="1.15" stroke-linejoin="round"/>
<path d="M792.9,500.2 L793.5,500.2 L794.0,500.2 L794.6,500.2 L795.1,497.6 L795.7,494.3 L796.2,493.0 L796.8,495.3 L797.3,493.8 L797.9,492.8 L798.4,490.4 L799.0,491.7 L799.5,491.2 L800.1,489.4 L800.6,489.6 L801.2,490.9 L801.7,489.5 L802.3,490.5 L802.8,489.1 L803.4,491.5 L803.9,491.1 L804.5,488.5 L805.0,490.6 L805.6,490.9 L806.1,488.8 L806.7,489.5 L807.2,491.3 L807.8,489.7 L808.3,489.3 L808.9,491.1 L809.4,489.3 L810.0,491.3 L810.5,490.4 L811.1,491.4 L811.6,490.9 L812.2,488.0 L812.7,490.1 L813.3,487.9 L813.8,490.0 L814.4,489.4 L814.9,488.4 L815.5,489.2 L816.0,491.3 L816.6,489.6 L817.1,489.4 L817.7,491.1 L818.3,491.5 L818.8,488.5 L819.4,489.9 L819.9,491.2 L820.5,490.2 L821.0,491.3 L821.6,489.6 L822.1,491.1 L822.7,493.0 L823.2,490.7 L823.8,493.9 L824.3,493.2 L824.9,493.5 L825.4,491.8 L826.0,493.3 L826.5,492.4 L827.1,493.4 L827.6,492.5 L828.2,492.0 L828.7,492.4 L829.3,492.6 L829.8,492.6 L830.4,492.7 L830.9,492.3 L831.5,493.5 L832.0,492.6 L832.6,493.2 L833.1,491.7 L833.7,491.6 L834.2,493.7 L834.8,493.5 L835.3,492.1 L835.9,492.3 L836.4,493.6 L837.0,491.9 L837.5,491.3 L838.1,492.5 L838.6,492.6 L839.2,492.0 L839.7,491.1 L840.3,492.6 L840.8,492.5 L841.4,492.7 L841.9,491.6 L842.5,491.9 L843.0,492.3 L843.6,492.0 L844.2,492.7 L844.7,492.0 L845.3,490.4 L845.8,491.3 L846.4,491.9 L846.9,490.3 L847.5,491.6 L848.0,491.8 L848.6,492.3 L849.1,492.0 L849.7,491.8 L850.2,491.8 L850.8,490.3 L851.3,491.8 L851.9,491.9 L852.4,491.2 L853.0,490.5 L853.5,492.0 L854.1,491.0 L854.6,492.0 L855.2,491.6 L855.7,491.6 L856.3,490.8 L856.8,491.1 L857.4,491.7 L857.9,490.8 L858.5,491.9 L859.0,491.7 L859.6,490.3 L860.1,491.2 L860.7,490.6 L861.2,491.6 L861.8,490.2 L862.3,490.8 L862.9,491.6 L863.4,489.9 L864.0,490.9 L864.5,491.2 L865.1,491.3 L865.6,491.6 L866.2,491.3 L866.7,490.1 L867.3,491.3 L867.8,490.9 L868.4,490.4 L869.0,490.1 L869.5,490.5 L870.1,489.5 L870.6,490.6 L871.2,490.3 L871.7,490.1 L872.3,490.8 L872.8,490.5 L873.4,490.6 L873.9,489.2 L874.5,490.5 L875.0,489.2 L875.6,490.2 L876.1,489.2 L876.7,489.1 L877.2,489.7 L877.8,488.3 L878.3,488.9 L878.9,489.1 L879.4,490.2 L880.0,489.3 L880.5,489.6 L881.1,489.1 L881.6,487.9 L882.2,488.0 L882.7,489.8 L883.3,488.3 L883.8,487.7 L884.4,488.8 L884.9,489.9 L885.5,488.3 L886.0,489.4 L886.6,488.3 L887.1,488.6 L887.7,488.9 L888.2,488.8 L888.8,490.9 L889.3,489.4 L889.9,490.7 L890.4,491.2 L891.0,490.7 L891.5,490.3 L892.1,491.7 L892.6,490.7 L893.2,489.9 L893.7,490.6 L894.3,490.5 L894.9,491.1 L895.4,489.5 L896.0,491.2 L896.5,490.2 L897.1,490.3 L897.6,491.8 L898.2,489.5 L898.7,491.3 L899.3,489.5 L899.8,489.7 L900.4,489.8 L900.9,489.9 L901.5,491.0 L902.0,490.9 L902.6,491.1 L903.1,489.7 L903.7,491.9 L904.2,491.6 L904.8,489.7 L905.3,490.1 L905.9,490.3 L906.4,489.7 L907.0,490.8 L907.5,490.1 L908.1,491.0 L908.6,489.9 L909.2,491.9 L909.7,491.0 L910.3,490.7 L910.8,490.2 L911.4,491.1 L911.9,490.5 L912.5,489.8 L913.0,491.1 L913.6,491.7 L914.1,492.1 L914.7,490.1 L915.2,491.1 L915.8,491.3 L916.3,491.0 L916.9,491.9 L917.4,491.7 L918.0,491.7 L918.5,491.6 L919.1,490.2 L919.1,500.5 L792.9,500.5 Z" fill="#ed7e17" fill-opacity="0.1"/><path d="M792.9,500.2 L793.5,500.2 L794.0,500.2 L794.6,500.2 L795.1,497.6 L795.7,494.3 L796.2,493.0 L796.8,495.3 L797.3,493.8 L797.9,492.8 L798.4,490.4 L799.0,491.7 L799.5,491.2 L800.1,489.4 L800.6,489.6 L801.2,490.9 L801.7,489.5 L802.3,490.5 L802.8,489.1 L803.4,491.5 L803.9,491.1 L804.5,488.5 L805.0,490.6 L805.6,490.9 L806.1,488.8 L806.7,489.5 L807.2,491.3 L807.8,489.7 L808.3,489.3 L808.9,491.1 L809.4,489.3 L810.0,491.3 L810.5,490.4 L811.1,491.4 L811.6,490.9 L812.2,488.0 L812.7,490.1 L813.3,487.9 L813.8,490.0 L814.4,489.4 L814.9,488.4 L815.5,489.2 L816.0,491.3 L816.6,489.6 L817.1,489.4 L817.7,491.1 L818.3,491.5 L818.8,488.5 L819.4,489.9 L819.9,491.2 L820.5,490.2 L821.0,491.3 L821.6,489.6 L822.1,491.1 L822.7,493.0 L823.2,490.7 L823.8,493.9 L824.3,493.2 L824.9,493.5 L825.4,491.8 L826.0,493.3 L826.5,492.4 L827.1,493.4 L827.6,492.5 L828.2,492.0 L828.7,492.4 L829.3,492.6 L829.8,492.6 L830.4,492.7 L830.9,492.3 L831.5,493.5 L832.0,492.6 L832.6,493.2 L833.1,491.7 L833.7,491.6 L834.2,493.7 L834.8,493.5 L835.3,492.1 L835.9,492.3 L836.4,493.6 L837.0,491.9 L837.5,491.3 L838.1,492.5 L838.6,492.6 L839.2,492.0 L839.7,491.1 L840.3,492.6 L840.8,492.5 L841.4,492.7 L841.9,491.6 L842.5,491.9 L843.0,492.3 L843.6,492.0 L844.2,492.7 L844.7,492.0 L845.3,490.4 L845.8,491.3 L846.4,491.9 L846.9,490.3 L847.5,491.6 L848.0,491.8 L848.6,492.3 L849.1,492.0 L849.7,491.8 L850.2,491.8 L850.8,490.3 L851.3,491.8 L851.9,491.9 L852.4,491.2 L853.0,490.5 L853.5,492.0 L854.1,491.0 L854.6,492.0 L855.2,491.6 L855.7,491.6 L856.3,490.8 L856.8,491.1 L857.4,491.7 L857.9,490.8 L858.5,491.9 L859.0,491.7 L859.6,490.3 L860.1,491.2 L860.7,490.6 L861.2,491.6 L861.8,490.2 L862.3,490.8 L862.9,491.6 L863.4,489.9 L864.0,490.9 L864.5,491.2 L865.1,491.3 L865.6,491.6 L866.2,491.3 L866.7,490.1 L867.3,491.3 L867.8,490.9 L868.4,490.4 L869.0,490.1 L869.5,490.5 L870.1,489.5 L870.6,490.6 L871.2,490.3 L871.7,490.1 L872.3,490.8 L872.8,490.5 L873.4,490.6 L873.9,489.2 L874.5,490.5 L875.0,489.2 L875.6,490.2 L876.1,489.2 L876.7,489.1 L877.2,489.7 L877.8,488.3 L878.3,488.9 L878.9,489.1 L879.4,490.2 L880.0,489.3 L880.5,489.6 L881.1,489.1 L881.6,487.9 L882.2,488.0 L882.7,489.8 L883.3,488.3 L883.8,487.7 L884.4,488.8 L884.9,489.9 L885.5,488.3 L886.0,489.4 L886.6,488.3 L887.1,488.6 L887.7,488.9 L888.2,488.8 L888.8,490.9 L889.3,489.4 L889.9,490.7 L890.4,491.2 L891.0,490.7 L891.5,490.3 L892.1,491.7 L892.6,490.7 L893.2,489.9 L893.7,490.6 L894.3,490.5 L894.9,491.1 L895.4,489.5 L896.0,491.2 L896.5,490.2 L897.1,490.3 L897.6,491.8 L898.2,489.5 L898.7,491.3 L899.3,489.5 L899.8,489.7 L900.4,489.8 L900.9,489.9 L901.5,491.0 L902.0,490.9 L902.6,491.1 L903.1,489.7 L903.7,491.9 L904.2,491.6 L904.8,489.7 L905.3,490.1 L905.9,490.3 L906.4,489.7 L907.0,490.8 L907.5,490.1 L908.1,491.0 L908.6,489.9 L909.2,491.9 L909.7,491.0 L910.3,490.7 L910.8,490.2 L911.4,491.1 L911.9,490.5 L912.5,489.8 L913.0,491.1 L913.6,491.7 L914.1,492.1 L914.7,490.1 L915.2,491.1 L915.8,491.3 L916.3,491.0 L916.9,491.9 L917.4,491.7 L918.0,491.7 L918.5,491.6 L919.1,490.2" fill="none" stroke="#ed7e17" stroke-width="1.15" stroke-linejoin="round"/>
<path d="M792.9,552.5 L793.5,552.5 L794.0,552.5 L794.6,552.5 L795.1,552.5 L795.7,552.5 L796.2,552.5 L796.8,552.5 L797.3,552.5 L797.9,552.5 L798.4,550.3 L799.0,549.4 L799.5,547.9 L800.1,548.3 L800.6,546.7 L801.2,548.2 L801.7,546.9 L802.3,547.3 L802.8,547.0 L803.4,546.8 L803.9,548.0 L804.5,547.9 L805.0,547.3 L805.6,540.5 L806.1,547.7 L806.7,548.1 L807.2,547.2 L807.8,547.2 L808.3,547.3 L808.9,548.2 L809.4,547.2 L810.0,547.8 L810.5,548.3 L811.1,548.0 L811.6,548.0 L812.2,548.6 L812.7,547.9 L813.3,548.2 L813.8,547.9 L814.4,547.4 L814.9,547.8 L815.5,548.2 L816.0,547.5 L816.6,547.4 L817.1,552.5 L817.7,547.5 L818.3,540.5 L818.8,551.9 L819.4,548.7 L819.9,547.5 L820.5,547.9 L821.0,547.9 L821.6,548.6 L822.1,548.3 L822.7,547.7 L823.2,548.9 L823.8,548.9 L824.3,549.0 L824.9,548.3 L825.4,548.0 L826.0,548.3 L826.5,548.4 L827.1,548.3 L827.6,548.7 L828.2,540.5 L828.7,546.5 L829.3,548.6 L829.8,548.6 L830.4,548.1 L830.9,548.6 L831.5,548.0 L832.0,548.6 L832.6,548.5 L833.1,548.9 L833.7,548.1 L834.2,548.2 L834.8,548.5 L835.3,548.9 L835.9,548.5 L836.4,548.6 L837.0,548.2 L837.5,548.1 L838.1,548.3 L838.6,548.8 L839.2,549.0 L839.7,548.2 L840.3,548.2 L840.8,548.9 L841.4,548.6 L841.9,548.7 L842.5,548.2 L843.0,549.1 L843.6,549.1 L844.2,548.3 L844.7,548.6 L845.3,548.7 L845.8,548.4 L846.4,548.6 L846.9,548.5 L847.5,549.0 L848.0,549.1 L848.6,549.2 L849.1,548.9 L849.7,548.6 L850.2,548.9 L850.8,548.9 L851.3,548.7 L851.9,548.6 L852.4,548.7 L853.0,549.0 L853.5,548.5 L854.1,548.6 L854.6,548.5 L855.2,548.5 L855.7,545.1 L856.3,548.7 L856.8,549.0 L857.4,549.0 L857.9,548.8 L858.5,549.2 L859.0,549.1 L859.6,548.4 L860.1,549.0 L860.7,548.4 L861.2,548.6 L861.8,551.9 L862.3,549.0 L862.9,548.7 L863.4,548.6 L864.0,548.9 L864.5,549.2 L865.1,549.0 L865.6,548.4 L866.2,548.5 L866.7,549.1 L867.3,548.4 L867.8,548.6 L868.4,548.8 L869.0,548.3 L869.5,549.0 L870.1,549.0 L870.6,548.8 L871.2,548.4 L871.7,548.6 L872.3,548.6 L872.8,548.2 L873.4,548.7 L873.9,548.3 L874.5,549.0 L875.0,548.3 L875.6,548.9 L876.1,548.4 L876.7,548.2 L877.2,548.3 L877.8,548.4 L878.3,548.4 L878.9,548.2 L879.4,548.6 L880.0,548.7 L880.5,548.4 L881.1,548.4 L881.6,548.8 L882.2,548.4 L882.7,548.4 L883.3,548.7 L883.8,548.2 L884.4,548.1 L884.9,548.5 L885.5,548.0 L886.0,547.9 L886.6,548.2 L887.1,548.4 L887.7,548.5 L888.2,548.6 L888.8,548.5 L889.3,547.8 L889.9,548.7 L890.4,547.8 L891.0,548.0 L891.5,548.0 L892.1,548.6 L892.6,548.1 L893.2,548.5 L893.7,548.0 L894.3,547.9 L894.9,547.9 L895.4,548.1 L896.0,547.7 L896.5,548.3 L897.1,548.4 L897.6,547.7 L898.2,548.4 L898.7,548.1 L899.3,548.1 L899.8,547.6 L900.4,548.1 L900.9,547.8 L901.5,547.9 L902.0,547.9 L902.6,547.9 L903.1,547.9 L903.7,547.7 L904.2,547.9 L904.8,547.8 L905.3,547.3 L905.9,547.3 L906.4,547.9 L907.0,547.3 L907.5,548.1 L908.1,547.8 L908.6,547.2 L909.2,547.9 L909.7,547.4 L910.3,547.1 L910.8,547.4 L911.4,547.6 L911.9,547.9 L912.5,547.5 L913.0,547.4 L913.6,546.9 L914.1,547.2 L914.7,546.6 L915.2,546.8 L915.8,546.4 L916.3,544.4 L916.9,542.3 L917.4,540.5 L918.0,541.0 L918.5,541.4 L919.1,541.2 L919.1,552.5 L792.9,552.5 Z" fill="#50b432" fill-opacity="0.1"/><path d="M792.9,552.5 L793.5,552.5 L794.0,552.5 L794.6,552.5 L795.1,552.5 L795.7,552.5 L796.2,552.5 L796.8,552.5 L797.3,552.5 L797.9,552.5 L798.4,550.3 L799.0,549.4 L799.5,547.9 L800.1,548.3 L800.6,546.7 L801.2,548.2 L801.7,546.9 L802.3,547.3 L802.8,547.0 L803.4,546.8 L803.9,548.0 L804.5,547.9 L805.0,547.3 L805.6,540.5 L806.1,547.7 L806.7,548.1 L807.2,547.2 L807.8,547.2 L808.3,547.3 L808.9,548.2 L809.4,547.2 L810.0,547.8 L810.5,548.3 L811.1,548.0 L811.6,548.0 L812.2,548.6 L812.7,547.9 L813.3,548.2 L813.8,547.9 L814.4,547.4 L814.9,547.8 L815.5,548.2 L816.0,547.5 L816.6,547.4 L817.1,552.5 L817.7,547.5 L818.3,540.5 L818.8,551.9 L819.4,548.7 L819.9,547.5 L820.5,547.9 L821.0,547.9 L821.6,548.6 L822.1,548.3 L822.7,547.7 L823.2,548.9 L823.8,548.9 L824.3,549.0 L824.9,548.3 L825.4,548.0 L826.0,548.3 L826.5,548.4 L827.1,548.3 L827.6,548.7 L828.2,540.5 L828.7,546.5 L829.3,548.6 L829.8,548.6 L830.4,548.1 L830.9,548.6 L831.5,548.0 L832.0,548.6 L832.6,548.5 L833.1,548.9 L833.7,548.1 L834.2,548.2 L834.8,548.5 L835.3,548.9 L835.9,548.5 L836.4,548.6 L837.0,548.2 L837.5,548.1 L838.1,548.3 L838.6,548.8 L839.2,549.0 L839.7,548.2 L840.3,548.2 L840.8,548.9 L841.4,548.6 L841.9,548.7 L842.5,548.2 L843.0,549.1 L843.6,549.1 L844.2,548.3 L844.7,548.6 L845.3,548.7 L845.8,548.4 L846.4,548.6 L846.9,548.5 L847.5,549.0 L848.0,549.1 L848.6,549.2 L849.1,548.9 L849.7,548.6 L850.2,548.9 L850.8,548.9 L851.3,548.7 L851.9,548.6 L852.4,548.7 L853.0,549.0 L853.5,548.5 L854.1,548.6 L854.6,548.5 L855.2,548.5 L855.7,545.1 L856.3,548.7 L856.8,549.0 L857.4,549.0 L857.9,548.8 L858.5,549.2 L859.0,549.1 L859.6,548.4 L860.1,549.0 L860.7,548.4 L861.2,548.6 L861.8,551.9 L862.3,549.0 L862.9,548.7 L863.4,548.6 L864.0,548.9 L864.5,549.2 L865.1,549.0 L865.6,548.4 L866.2,548.5 L866.7,549.1 L867.3,548.4 L867.8,548.6 L868.4,548.8 L869.0,548.3 L869.5,549.0 L870.1,549.0 L870.6,548.8 L871.2,548.4 L871.7,548.6 L872.3,548.6 L872.8,548.2 L873.4,548.7 L873.9,548.3 L874.5,549.0 L875.0,548.3 L875.6,548.9 L876.1,548.4 L876.7,548.2 L877.2,548.3 L877.8,548.4 L878.3,548.4 L878.9,548.2 L879.4,548.6 L880.0,548.7 L880.5,548.4 L881.1,548.4 L881.6,548.8 L882.2,548.4 L882.7,548.4 L883.3,548.7 L883.8,548.2 L884.4,548.1 L884.9,548.5 L885.5,548.0 L886.0,547.9 L886.6,548.2 L887.1,548.4 L887.7,548.5 L888.2,548.6 L888.8,548.5 L889.3,547.8 L889.9,548.7 L890.4,547.8 L891.0,548.0 L891.5,548.0 L892.1,548.6 L892.6,548.1 L893.2,548.5 L893.7,548.0 L894.3,547.9 L894.9,547.9 L895.4,548.1 L896.0,547.7 L896.5,548.3 L897.1,548.4 L897.6,547.7 L898.2,548.4 L898.7,548.1 L899.3,548.1 L899.8,547.6 L900.4,548.1 L900.9,547.8 L901.5,547.9 L902.0,547.9 L902.6,547.9 L903.1,547.9 L903.7,547.7 L904.2,547.9 L904.8,547.8 L905.3,547.3 L905.9,547.3 L906.4,547.9 L907.0,547.3 L907.5,548.1 L908.1,547.8 L908.6,547.2 L909.2,547.9 L909.7,547.4 L910.3,547.1 L910.8,547.4 L911.4,547.6 L911.9,547.9 L912.5,547.5 L913.0,547.4 L913.6,546.9 L914.1,547.2 L914.7,546.6 L915.2,546.8 L915.8,546.4 L916.3,544.4 L916.9,542.3 L917.4,540.5 L918.0,541.0 L918.5,541.4 L919.1,541.2" fill="none" stroke="#50b432" stroke-width="1.15" stroke-linejoin="round"/></svg>
<span class="t" style="left:43.8px;top:16px;font-size:16.5px;color:#5f6368;transform:scaleX(0.984)">Analytics</span>
<span class="t" style="left:133.7px;top:9px;font-size:9.5px;color:#5f6368;-webkit-text-stroke:0.2px #5f6368;transform:scaleX(0.913)">All accounts &gt; Ανακαινιση Σπιτιού</span>
<span class="t" style="left:134.0px;top:22px;font-size:17px;color:#202124;transform:scaleX(0.983)">anakainisisspitiou All Data</span>
<span class="t" style="left:406.0px;top:19px;font-size:10.8px;color:#5f6368;transform:scaleX(1.054)">Try searching “Worst pages by load speed”</span>
<span class="t" style="left:43.2px;top:58px;font-size:11px;color:#5f6368;transform:scaleX(0.999)">Home</span>
<span class="t" style="left:43.2px;top:88px;font-size:11px;color:#5f6368;transform:scaleX(1.046)">Customization</span>
<span class="t" style="left:16.2px;top:121px;font-size:9px;color:#5f6368;letter-spacing:1.16px;transform:scaleX(0.775)">REPORTS</span>
<span class="t" style="left:43.2px;top:146px;font-size:11px;color:#5f6368;transform:scaleX(1.016)">Realtime</span>
<span class="t" style="left:43.2px;top:176px;font-size:11px;color:#5f6368;transform:scaleX(1.029)">Audience</span>
<span class="t" style="left:43.2px;top:206px;font-size:11px;color:#5f6368;transform:scaleX(1.066)">Acquisition</span>
<span class="t" style="left:43.2px;top:236px;font-size:11px;color:#5f6368;transform:scaleX(1.016)">Behavior</span>
<span class="t" style="left:52.4px;top:263px;font-size:11px;color:#1a73e8;transform:scaleX(1.058)">Overview</span>
<span class="t" style="left:52.0px;top:287px;font-size:11px;color:#5f6368;transform:scaleX(1.023)">Behavior Flow</span>
<span class="t" style="left:57.0px;top:311px;font-size:11px;color:#5f6368;transform:scaleX(1.019)">Site Content</span>
<span class="t" style="left:57.0px;top:335px;font-size:11px;color:#5f6368;transform:scaleX(0.985)">Site Speed</span>
<span class="t" style="left:57.0px;top:359px;font-size:11px;color:#5f6368;transform:scaleX(0.985)">Site Search</span>
<span class="t" style="left:57.0px;top:383px;font-size:11px;color:#5f6368;transform:scaleX(0.987)">Events</span>
<span class="t" style="left:57.0px;top:407px;font-size:11px;color:#5f6368;transform:scaleX(1.003)">Publisher</span>
<span class="t" style="left:52.0px;top:431px;font-size:11px;color:#5f6368;transform:scaleX(1.040)">Experiments</span>
<span class="t" style="left:43.3px;top:458px;font-size:11px;color:#5f6368;transform:scaleX(1.014)">Conversions</span>
<span class="t" style="left:205.5px;top:65px;font-size:14px;color:#414141;font-weight:700;transform:scaleX(0.890)">Overview</span>
<span class="t" style="left:1016.7px;top:68px;font-size:8.6px;color:#444;-webkit-text-stroke:0.32px #444;transform:scaleX(0.906)">SAVE</span>
<span class="t" style="left:1071.6px;top:68px;font-size:8.6px;color:#444;-webkit-text-stroke:0.32px #444;transform:scaleX(0.864)">EXPORT</span>
<span class="t" style="left:1137.0px;top:68px;font-size:8.6px;color:#444;-webkit-text-stroke:0.32px #444;transform:scaleX(0.888)">SHARE</span>
<span class="t" style="left:1205.6px;top:68px;font-size:8.6px;color:#444;-webkit-text-stroke:0.32px #444;transform:scaleX(0.916)">INSIGHTS</span>
<span class="t" style="left:261.3px;top:106px;font-size:11px;color:#222;transform:scaleX(0.820)">All Users</span>
<span class="t" style="left:261.3px;top:119px;font-size:9px;color:#555;transform:scaleX(0.809)">100.00% Pageviews</span>
<span class="t" style="left:527.3px;top:106px;font-size:11px;color:#222;transform:scaleX(0.848)">Organic Traffic</span>
<span class="t" style="left:527.3px;top:119px;font-size:9px;color:#555;transform:scaleX(0.810)">58.74% Pageviews</span>
<span class="t" style="left:793.3px;top:106px;font-size:11px;color:#222;transform:scaleX(0.857)">Paid Traffic</span>
<span class="t" style="left:793.3px;top:119px;font-size:9px;color:#555;transform:scaleX(0.810)">30.59% Pageviews</span>
<span class="t" style="left:1100.2px;top:97px;font-size:12.5px;color:#333;transform:scaleX(0.833)">Oct 1, 2015 - Aug 28, 2019</span>
<span class="t" style="left:217.6px;top:155px;font-size:9.5px;color:#222;font-weight:700;transform:scaleX(0.942)">Overview</span>
<span class="t" style="left:224.3px;top:186px;font-size:9px;color:#333;-webkit-text-stroke:0.25px #333;transform:scaleX(0.786)">Pageviews</span>
<span class="t" style="left:281.0px;top:183px;font-size:10px;color:#444;font-weight:700;transform:scaleX(0.777)">vs.</span>
<span class="t" style="left:300.3px;top:186px;font-size:9px;color:#1255b5;-webkit-text-stroke:0.2px #1255b5;transform:scaleX(0.810)">Select a metric</span>
<span class="t" style="left:1115.4px;top:186px;font-size:9px;color:#4a4a4a;font-weight:700;transform:scaleX(0.852)">Hourly</span>
<span class="t" style="left:1151.2px;top:186px;font-size:9px;color:#4a4a4a;font-weight:700;transform:scaleX(0.836)">Day</span>
<span class="t" style="left:1176.5px;top:186px;font-size:9px;color:#111;font-weight:700;transform:scaleX(0.890)">Week</span>
<span class="t" style="left:1207.7px;top:186px;font-size:9px;color:#4a4a4a;font-weight:700;transform:scaleX(0.900)">Month</span>
<span class="t" style="left:231.6px;top:214px;font-size:10.5px;color:#222;transform:scaleX(0.818)">Pageviews (All Users)</span>
<span class="t" style="left:345.0px;top:214px;font-size:10.5px;color:#222;transform:scaleX(0.823)">Pageviews (Organic Traffic)</span>
<span class="t" style="left:479.6px;top:214px;font-size:10.5px;color:#222;transform:scaleX(0.823)">Pageviews (Paid Traffic)</span>
<span class="t" style="left:219.8px;top:232px;font-size:9px;color:#222;transform:scaleX(0.915)">10,000</span>
<span class="t" style="left:219.9px;top:284px;font-size:9px;color:#222;transform:scaleX(0.910)">5,000</span>
<span class="t" style="left:273.8px;top:337px;font-size:9px;color:#444;transform:scaleX(0.919)">2016</span>
<span class="t" style="left:532.2px;top:337px;font-size:9px;color:#444;transform:scaleX(0.919)">2017</span>
<span class="t" style="left:789.8px;top:337px;font-size:9px;color:#444;transform:scaleX(0.919)">2018</span>
<span class="t" style="left:1046.6px;top:337px;font-size:9px;color:#444;transform:scaleX(0.919)">2019</span>
<span class="t" style="left:218.2px;top:385px;font-size:10px;color:#222;transform:scaleX(0.835)">Pageviews</span>
<span class="t" style="left:218.2px;top:400px;font-size:10px;color:#666;transform:scaleX(0.850)">All Users</span>
<span class="t" style="left:218.2px;top:412px;font-size:17.8px;color:#222;letter-spacing:1.12px;transform:scaleX(0.805)">511,860</span>
<span class="t" style="left:218.2px;top:453px;font-size:10px;color:#666;transform:scaleX(0.865)">Organic Traffic</span>
<span class="t" style="left:218.2px;top:465px;font-size:17.8px;color:#222;letter-spacing:1.14px;transform:scaleX(0.789)">300,674</span>
<span class="t" style="left:218.2px;top:505px;font-size:10px;color:#666;transform:scaleX(0.857)">Paid Traffic</span>
<span class="t" style="left:218.2px;top:517px;font-size:17.8px;color:#222;letter-spacing:1.14px;transform:scaleX(0.789)">156,579</span>
<span class="t" style="left:361.1px;top:385px;font-size:10px;color:#222;transform:scaleX(0.839)">Unique Pageviews</span>
<span class="t" style="left:361.1px;top:400px;font-size:10px;color:#666;transform:scaleX(0.850)">All Users</span>
<span class="t" style="left:361.1px;top:412px;font-size:17.8px;color:#222;letter-spacing:1.14px;transform:scaleX(0.789)">380,992</span>
<span class="t" style="left:361.1px;top:453px;font-size:10px;color:#666;transform:scaleX(0.865)">Organic Traffic</span>
<span class="t" style="left:361.1px;top:465px;font-size:17.8px;color:#222;letter-spacing:1.14px;transform:scaleX(0.789)">218,252</span>
<span class="t" style="left:361.1px;top:505px;font-size:10px;color:#666;transform:scaleX(0.857)">Paid Traffic</span>
<span class="t" style="left:361.1px;top:517px;font-size:17.8px;color:#222;letter-spacing:1.14px;transform:scaleX(0.789)">120,662</span>
<span class="t" style="left:504.6px;top:385px;font-size:10px;color:#222;transform:scaleX(0.848)">Avg. Time on Page</span>
<span class="t" style="left:504.6px;top:400px;font-size:10px;color:#666;transform:scaleX(0.850)">All Users</span>
<span class="t" style="left:504.6px;top:412px;font-size:17.8px;color:#222;letter-spacing:1.13px;transform:scaleX(0.795)">00:01:24</span>
<span class="t" style="left:504.6px;top:453px;font-size:10px;color:#666;transform:scaleX(0.865)">Organic Traffic</span>
<span class="t" style="left:504.6px;top:465px;font-size:17.8px;color:#222;letter-spacing:1.13px;transform:scaleX(0.795)">00:01:24</span>
<span class="t" style="left:504.6px;top:505px;font-size:10px;color:#666;transform:scaleX(0.857)">Paid Traffic</span>
<span class="t" style="left:504.6px;top:517px;font-size:17.8px;color:#222;letter-spacing:1.13px;transform:scaleX(0.795)">00:01:15</span>
<span class="t" style="left:647.9px;top:385px;font-size:10px;color:#222;transform:scaleX(0.830)">Bounce Rate</span>
<span class="t" style="left:647.9px;top:400px;font-size:10px;color:#666;transform:scaleX(0.850)">All Users</span>
<span class="t" style="left:647.9px;top:412px;font-size:17.8px;color:#222;letter-spacing:1.17px;transform:scaleX(0.771)">48.59%</span>
<span class="t" style="left:647.9px;top:453px;font-size:10px;color:#666;transform:scaleX(0.865)">Organic Traffic</span>
<span class="t" style="left:647.9px;top:465px;font-size:17.8px;color:#222;letter-spacing:1.17px;transform:scaleX(0.771)">44.66%</span>
<span class="t" style="left:647.9px;top:505px;font-size:10px;color:#666;transform:scaleX(0.857)">Paid Traffic</span>
<span class="t" style="left:647.9px;top:517px;font-size:17.8px;color:#222;letter-spacing:1.17px;transform:scaleX(0.771)">50.02%</span>
<span class="t" style="left:790.9px;top:385px;font-size:10px;color:#222;transform:scaleX(0.776)">% Exit</span>
<span class="t" style="left:790.9px;top:400px;font-size:10px;color:#666;transform:scaleX(0.850)">All Users</span>
<span class="t" style="left:790.9px;top:412px;font-size:17.8px;color:#222;letter-spacing:1.17px;transform:scaleX(0.771)">33.04%</span>
<span class="t" style="left:790.9px;top:453px;font-size:10px;color:#666;transform:scaleX(0.865)">Organic Traffic</span>
<span class="t" style="left:790.9px;top:465px;font-size:17.8px;color:#222;letter-spacing:1.17px;transform:scaleX(0.771)">31.48%</span>
<span class="t" style="left:790.9px;top:505px;font-size:10px;color:#666;transform:scaleX(0.857)">Paid Traffic</span>
<span class="t" style="left:790.9px;top:517px;font-size:17.8px;color:#222;letter-spacing:1.17px;transform:scaleX(0.771)">33.13%</span>
<svg class="abs" style="left:1117px;top:14px" width="7" height="9" viewBox="0 0 7 9"><path d="M1.600,3.300 L3.900,1.800 L3.900,7.900" fill="none" stroke="#4a3a10" stroke-width="1.250"/></svg>
<span class="t" style="left:1195.700px;top:73.600px;font-size:6.500px;font-weight:700;color:#fff">8</span>
</body></html>
